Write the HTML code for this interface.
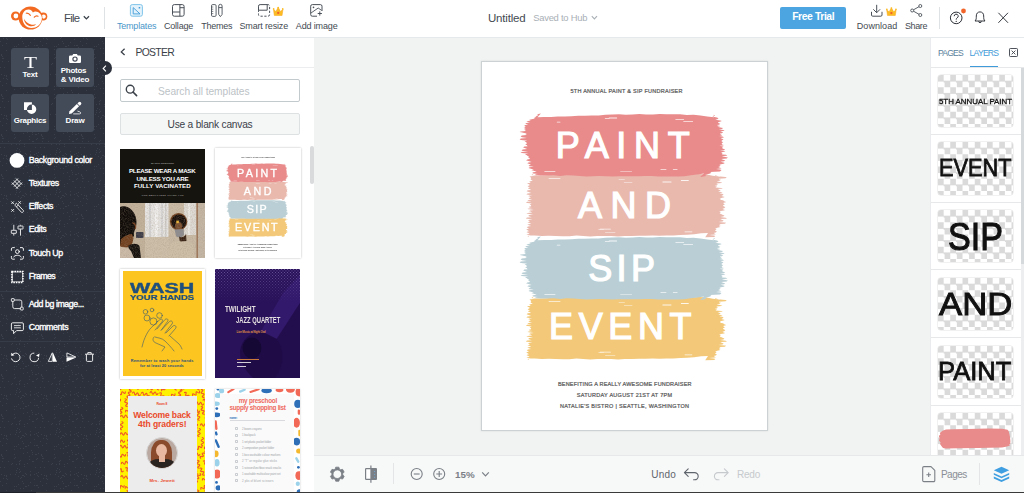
<!DOCTYPE html><html><head><meta charset="utf-8"><title>PicMonkey</title><style>
*{box-sizing:border-box;margin:0;padding:0}
html,body{width:1024px;height:493px;overflow:hidden;background:#f1f2f2;font-family:"Liberation Sans",sans-serif;color:#3b4149}
.a{position:absolute}
.t{position:absolute;white-space:nowrap}
svg{position:absolute;overflow:visible}
#top{position:absolute;left:0;top:0;width:1024px;height:38px;background:#fff;border-bottom:1px solid #e6e9eb}
#side{position:absolute;left:0;top:37px;width:105px;height:455px;background:#2b303b}
#tpl{position:absolute;left:105px;top:38px;width:209px;height:454px;background:#fff;overflow:hidden}
#canvas{position:absolute;left:314px;top:38px;width:617px;height:418px;background:#f1f2f2}
#bot{position:absolute;left:314px;top:455px;width:710px;height:37px;background:#f7f8f8;border-top:1px solid #e6e8e9}
#layers{position:absolute;left:930px;top:38px;width:94px;height:417px;background:#fff;overflow:hidden;border-left:1px solid #e9ebed}
#edge{position:absolute;left:0;top:492px;width:1024px;height:1px;background:#3a3a3a}
#edge i{position:absolute;left:0;top:0;width:36px;height:1px;background:#1e2127}
.sbtn{position:absolute;width:38.5px;height:38.5px;background:#434a58;border-radius:3px}
</style></head><body>
<div id="top"><span class="t" style="left:64.00px;top:10.55px;font-size:11.4px;line-height:15px;color:#444a52;font-weight:normal;font-family:'Liberation Sans',sans-serif;letter-spacing:-0.765px;">File</span><svg style="left:83px;top:15px" width="7" height="6" viewBox="0 0 7 6"><path d="M0.8 1.2 L3.4 3.9 L6 1.2" fill="none" stroke="#3b4149" stroke-width="1.3"/></svg><div class="a" style="left:104px;top:7px;width:1px;height:22px;background:#dfe2e4"></div><span class="t" style="left:116.90px;top:20.08px;font-size:9px;line-height:12px;color:#4a96c9;font-weight:normal;font-family:'Liberation Sans',sans-serif;letter-spacing:-0.181px;">Templates</span><span class="t" style="left:164.00px;top:20.08px;font-size:9px;line-height:12px;color:#444a52;font-weight:normal;font-family:'Liberation Sans',sans-serif;letter-spacing:-0.219px;">Collage</span><span class="t" style="left:201.20px;top:20.08px;font-size:9px;line-height:12px;color:#444a52;font-weight:normal;font-family:'Liberation Sans',sans-serif;letter-spacing:-0.253px;">Themes</span><span class="t" style="left:239.50px;top:20.08px;font-size:9px;line-height:12px;color:#444a52;font-weight:normal;font-family:'Liberation Sans',sans-serif;letter-spacing:-0.168px;">Smart resize</span><span class="t" style="left:295.80px;top:20.08px;font-size:9px;line-height:12px;color:#444a52;font-weight:normal;font-family:'Liberation Sans',sans-serif;letter-spacing:-0.148px;">Add image</span><span class="t" style="left:488.00px;top:10.52px;font-size:11.5px;line-height:15px;color:#444a52;font-weight:normal;font-family:'Liberation Sans',sans-serif;letter-spacing:-0.188px;">Untitled</span><span class="t" style="left:533.20px;top:10.94px;font-size:9.4px;line-height:13px;color:#a9b0b6;font-weight:normal;font-family:'Liberation Sans',sans-serif;letter-spacing:-0.234px;">Saved to Hub</span><svg style="left:591px;top:15px" width="7" height="6" viewBox="0 0 7 6"><path d="M0.8 1.2 L3.4 3.9 L6 1.2" fill="none" stroke="#a9b0b6" stroke-width="1.1"/></svg><div class="a" style="left:780px;top:7px;width:65.5px;height:22px;background:#4ca5e0;border-radius:2px"></div><span class="t" style="left:792.20px;top:9.90px;font-size:10.4px;line-height:14px;color:#fff;font-weight:bold;font-family:'Liberation Sans',sans-serif;letter-spacing:-0.422px;">Free Trial</span><span class="t" style="left:856.80px;top:20.08px;font-size:9px;line-height:12px;color:#444a52;font-weight:normal;font-family:'Liberation Sans',sans-serif;letter-spacing:0.059px;">Download</span><span class="t" style="left:905.00px;top:20.08px;font-size:9px;line-height:12px;color:#444a52;font-weight:normal;font-family:'Liberation Sans',sans-serif;letter-spacing:-0.406px;">Share</span><div class="a" style="left:939px;top:7px;width:1px;height:22px;background:#dfe2e4"></div><svg style="left:0;top:0" width="1024" height="37" viewBox="0 0 1024 37"><g transform="translate(0 0)"><circle cx="15.6" cy="16" r="4.6" fill="#f26a21"/><circle cx="15.9" cy="16" r="2.4" fill="#fff"/><circle cx="43.2" cy="16.5" r="4.1" fill="#f26a21"/><circle cx="43.7" cy="16.6" r="2.1" fill="#fff"/><ellipse cx="30.5" cy="18" rx="11.9" ry="11.5" fill="#f26a21"/><path d="M22.3 17.5 C22 12.5 25 9.3 28.5 9.4 C31 9.5 32.4 11 32.9 12.6 C34 11.3 36 11 38 12 C41 13.5 42.3 16.5 41.8 19.5 C41 24.5 36.5 28 31.5 28 C26 28 22.6 23.5 22.3 17.5 Z" fill="#fff"/><path d="M23.9 18.4 C24.3 23 27.6 26.3 31.6 26.3 C33.6 26.3 35.2 25.4 36.2 24.3 C33 25.2 30 24.6 27.8 22.9 C25.8 21.4 24.6 20 23.9 18.4 Z" fill="#f26a21"/><path d="M26.2 13.2 Q28.8 12.8 30.4 15.4" fill="none" stroke="#f26a21" stroke-width="1.1" stroke-linecap="round"/><path d="M34.3 17.2 Q36 15.2 38 16.2" fill="none" stroke="#f26a21" stroke-width="1.2" stroke-linecap="round"/><rect x="130.4" y="4.6" width="12" height="11.6" rx="1.8" fill="#e4f3fb" stroke="#7fc4ea" stroke-width="1"/><path d="M133.2 7.6 L133.2 13.9 L140 13.9 Z" fill="none" stroke="#3f9bd9" stroke-width="0.9" stroke-linejoin="round"/><rect x="138.7" y="7" width="1.5" height="1.5" fill="#3f9bd9"/><g fill="none" stroke="#4a5058" stroke-width="1"><rect x="172.5" y="4.6" width="11.6" height="11.6" rx="1.8"/><path d="M179.9 4.6 V16.2 M172.5 12 H179.9 M179.9 7.7 H184.1"/></g><g fill="none" stroke="#4a5058" stroke-width="0.9"><rect x="211.5" y="4.6" width="4.6" height="11.8" rx="1.2"/><path d="M211.5 7 h1.8 M211.5 9.2 h1.8 M211.5 11.4 h1.8 M211.5 13.6 h1.8" stroke-width="0.7"/><path d="M218.7 6 a1.7 1.7 0 0 1 3.4 0 V14.4 L220.4 16.6 L218.7 14.4 Z M218.7 7.6 H222.1"/></g><g fill="none" stroke="#4a5058" stroke-width="1"><path d="M258.5 10.2 V6.2 a1.6 1.6 0 0 1 1.6 -1.6 H267.2 V10.2 Z"/><path d="M267.2 4.6 H268 a1.6 1.6 0 0 1 1.6 1.6 V14.6 a1.6 1.6 0 0 1 -1.6 1.6 H260.1 a1.6 1.6 0 0 1 -1.6 -1.6 V10.2" stroke-dasharray="2.2 1.6"/></g><g transform="translate(272.8 6.8) scale(1.080 1.082)"><path d="M0.6 2.2 L2.9 4.4 L5 0.4 L7.1 4.4 L9.4 2.2 L8.6 8 L1.4 8 Z" fill="#fbbd23" stroke="#f9a61a" stroke-width="0.5" stroke-linejoin="round"/><circle cx="5" cy="5.6" r="1.1" fill="#f2612b"/><circle cx="0.8" cy="2" r="0.8" fill="#fbbd23"/><circle cx="9.2" cy="2" r="0.8" fill="#fbbd23"/><circle cx="5" cy="0.7" r="0.8" fill="#fbbd23"/></g><g fill="none" stroke="#4a5058" stroke-width="1"><path d="M317 16.2 H312.3 a1.6 1.6 0 0 1 -1.6 -1.6 V6.2 a1.6 1.6 0 0 1 1.6 -1.6 H320.4 a1.6 1.6 0 0 1 1.6 1.6 V11"/><path d="M311 13 L318.2 8 L321.6 10.4" stroke-width="0.9"/><path d="M319.8 11.4 V15.6 M317.7 13.5 H321.9"/></g><circle cx="313.5" cy="7.4" r="0.8" fill="#4a5058"/><g fill="none" stroke="#4a5058" stroke-width="1" stroke-linecap="round" stroke-linejoin="round"><path d="M876.7 5.2 V12.4 M873.6 9.6 L876.7 12.7 L879.8 9.6"/><path d="M871.5 12.2 V15 a1.2 1.2 0 0 0 1.2 1.2 H880.8 a1.2 1.2 0 0 0 1.2 -1.2 V12.2"/></g><g transform="translate(886 7.4) scale(1.080 1.012)"><path d="M0.6 2.2 L2.9 4.4 L5 0.4 L7.1 4.4 L9.4 2.2 L8.6 8 L1.4 8 Z" fill="#fbbd23" stroke="#f9a61a" stroke-width="0.5" stroke-linejoin="round"/><circle cx="5" cy="5.6" r="1.1" fill="#f2612b"/><circle cx="0.8" cy="2" r="0.8" fill="#fbbd23"/><circle cx="9.2" cy="2" r="0.8" fill="#fbbd23"/><circle cx="5" cy="0.7" r="0.8" fill="#fbbd23"/></g><g fill="none" stroke="#4a5058" stroke-width="0.9"><circle cx="920.3" cy="6" r="1.5"/><circle cx="912.2" cy="10.5" r="1.5"/><circle cx="920.3" cy="15" r="1.5"/><path d="M913.5 9.8 L919 6.7 M913.5 11.2 L919 14.3"/></g><circle cx="956.2" cy="17.9" r="5.8" fill="none" stroke="#2b2f36" stroke-width="1"/><path d="M954.2 16.2 a2 2 0 1 1 3 1.7 c-0.8 0.5 -1 0.9 -1 1.7" fill="none" stroke="#2b2f36" stroke-width="1"/><circle cx="956.2" cy="21.4" r="0.6" fill="#2b2f36"/><circle cx="963.5" cy="11" r="2.4" fill="#f2652a"/><g fill="none" stroke="#2b2f36" stroke-width="0.95" stroke-linejoin="round"><path d="M975 21 C976.4 19.8 976.3 18 976.3 16 C976.3 13.4 977.8 11.9 980 11.9 C982.2 11.9 983.7 13.4 983.7 16 C983.7 18 983.6 19.8 985 21 Z"/><path d="M978.7 21.2 a1.3 1.5 0 0 0 2.6 0"/></g><path d="M998.4 12.8 L1008 22.8 M1008 12.8 L998.4 22.8" stroke="#2b2f36" stroke-width="0.95" fill="none"/></g></svg></div>
<div id="canvas"><div class="a" style="left:167px;top:23px;width:287px;height:370px;background:#fff;border:1px solid #ccd1d4;box-shadow:0 0 2px rgba(0,0,0,.10)"><div class="a" style="left:-0.5px;top:-0.5px;width:286px;height:369px"><svg style="left:0;top:0" width="287" height="369" viewBox="0 0 287 369"><path d="M50.0 113.4 L57.2 113.4 L64.5 113.3 L71.7 112.8 L78.9 112.6 L86.2 112.8 L93.4 112.6 L100.6 112.9 L107.8 112.7 L115.1 112.6 L122.3 112.6 L129.5 112.6 L136.8 112.2 L144.0 112.4 L151.2 112.1 L158.5 112.6 L165.7 112.0 L172.9 112.5 L180.2 111.9 L187.4 112.4 L194.6 112.2 L201.8 112.3 L209.1 112.6 L216.3 112.1 L223.5 112.2 L230.8 113.8 L238.0 114.7 L232.5 113.0 L234.0 113.3 L232.8 113.9 L236.0 114.2 L243.3 115.1 L244.8 115.4 L243.6 116.3 L236.7 116.7 L237.4 117.5 L238.9 117.8 L237.7 118.7 L234.7 119.3 L238.9 120.2 L240.4 120.7 L239.2 121.1 L234.8 121.4 L234.5 122.2 L236.0 122.4 L234.8 123.4 L233.0 123.7 L233.6 124.2 L235.1 124.5 L233.9 125.3 L233.4 125.6 L239.3 125.9 L240.8 126.2 L239.6 126.8 L235.5 127.1 L237.3 127.8 L238.8 128.5 L237.6 129.0 L236.2 129.5 L239.1 130.0 L240.6 130.2 L239.4 130.8 L237.4 131.3 L240.1 131.8 L241.6 132.5 L240.4 133.6 L239.2 134.0 L241.2 134.6 L242.7 135.1 L241.5 135.6 L239.3 136.0 L237.6 136.9 L239.1 137.2 L237.9 137.7 L241.0 138.3 L242.7 139.4 L244.2 140.0 L243.0 140.5 L241.6 140.8 L241.5 141.7 L243.0 142.3 L241.8 143.0 L240.8 143.3 L241.9 144.5 L243.4 145.1 L242.2 146.2 L240.5 146.7 L241.6 147.5 L243.1 148.0 L241.9 148.6 L239.0 149.0 L237.3 149.8 L238.8 150.4 L237.6 151.4 L239.0 152.0 L241.0 153.0 L242.5 153.4 L241.3 154.4 L238.2 154.9 L243.5 155.7 L245.0 156.2 L243.8 156.7 L238.3 157.0 L240.2 157.9 L241.7 158.5 L240.5 159.4 L236.2 159.9 L242.6 160.5 L244.1 160.8 L242.9 161.7 L238.0 162.0 L237.4 162.6 L238.9 163.0 L237.7 163.5 L236.9 163.8 L237.1 164.3 L238.6 164.9 L237.4 165.3 L235.3 165.7 L233.2 166.8 L234.7 167.4 L233.5 167.9 L233.2 168.3 L233.5 168.9 L235.0 169.6 L233.8 170.4 L232.2 170.8 L232.5 171.8 L234.0 172.2 L232.8 172.6 L226.9 172.9 L231.9 173.4 L233.4 174.1 L232.2 174.9 L223.2 175.2 L226.0 171.1 L219.1 171.3 L212.2 172.2 L205.2 172.7 L198.3 173.0 L191.4 173.5 L184.5 173.4 L177.5 173.7 L170.6 173.5 L163.7 173.7 L156.8 173.8 L149.8 173.9 L142.9 174.0 L136.0 174.4 L129.1 173.9 L122.2 173.9 L115.2 173.9 L108.3 174.4 L101.4 174.0 L94.5 173.6 L87.5 174.2 L80.6 174.2 L73.7 174.1 L66.8 173.7 L59.8 174.0 L52.9 173.6 L46.0 173.4 L47.0 174.9 L45.5 174.6 L46.7 173.6 L48.4 173.3 L45.9 173.0 L44.4 172.6 L45.6 172.2 L47.7 171.9 L46.0 170.8 L44.5 170.3 L45.7 169.6 L47.0 169.2 L45.7 168.3 L44.2 167.8 L45.4 167.1 L46.9 166.6 L46.2 166.0 L44.7 165.6 L45.9 164.5 L49.1 164.1 L46.8 163.2 L45.3 162.8 L46.5 162.2 L49.3 161.7 L46.9 160.7 L45.4 160.4 L46.6 160.0 L48.3 159.8 L47.6 159.4 L46.1 158.7 L47.3 157.7 L50.6 157.2 L45.3 156.8 L43.8 156.5 L45.0 155.6 L49.8 155.2 L47.6 154.6 L46.1 154.0 L47.3 152.9 L51.2 152.4 L45.8 151.7 L44.3 151.2 L45.5 150.9 L50.1 150.6 L48.4 149.6 L46.9 149.2 L48.1 148.6 L51.8 148.1 L46.9 147.3 L45.4 146.9 L46.6 146.4 L50.8 146.1 L48.1 145.7 L46.6 145.1 L47.8 144.6 L49.1 144.2 L49.1 143.3 L47.6 142.8 L48.8 142.0 L49.7 141.6 L45.4 141.0 L43.9 140.5 L45.1 139.8 L49.6 139.6 L46.8 139.1 L45.3 138.4 L46.5 137.9 L50.2 137.5 L47.8 136.9 L46.3 136.6 L47.5 135.8 L48.8 135.5 L47.7 134.5 L46.2 134.2 L47.4 133.5 L50.5 133.2 L45.8 132.7 L44.3 132.2 L45.5 131.5 L49.2 130.9 L46.1 129.8 L44.6 129.2 L45.8 128.3 L49.3 128.0 L47.4 127.0 L45.9 126.5 L47.1 125.6 L48.5 125.3 L47.1 125.0 L45.6 124.5 L46.8 123.5 L48.0 122.9 L46.5 121.9 L45.0 121.4 L46.2 121.1 L48.1 120.9 L48.5 120.3 L47.0 119.9 L48.2 119.2 L50.8 118.7 L49.8 118.3 L48.3 117.6 L49.5 116.9 L48.8 116.6 L49.0 115.4 L47.5 114.8 L48.7 114.3 L51.8 113.9 L51.0 113.5 L49.5 112.9 L50.7 111.9 L51.8 111.5Z" fill="#e9b9ae"/><g fill="#fff" opacity="0.85"><rect x="136.6" y="117.5" width="6.2" height="0.5" rx="0.3"/><rect x="202.6" y="169.5" width="7.7" height="0.8" rx="0.3"/><rect x="198.9" y="118.1" width="7.9" height="0.8" rx="0.3"/><rect x="117.7" y="166.8" width="11.1" height="0.8" rx="0.3"/><rect x="141.8" y="120.2" width="8.6" height="0.6" rx="0.3"/><rect x="123.1" y="170.4" width="10.2" height="0.7" rx="0.3"/><rect x="180.4" y="119.6" width="9.1" height="0.8" rx="0.3"/><rect x="116.3" y="167.1" width="5.6" height="0.5" rx="0.3"/><rect x="66.6" y="116.3" width="11.8" height="0.7" rx="0.3"/></g><path d="M50.0 236.4 L57.2 236.4 L64.5 236.3 L71.7 235.8 L78.9 235.6 L86.2 235.8 L93.4 235.6 L100.6 235.9 L107.8 235.7 L115.1 235.6 L122.3 235.6 L129.5 235.6 L136.8 235.2 L144.0 235.4 L151.2 235.1 L158.5 235.6 L165.7 235.0 L172.9 235.5 L180.2 234.9 L187.4 235.4 L194.6 235.2 L201.8 235.3 L209.1 235.6 L216.3 235.1 L223.5 235.2 L230.8 236.8 L238.0 237.7 L232.5 236.0 L234.0 236.3 L232.8 236.9 L236.0 237.2 L243.3 238.1 L244.8 238.4 L243.6 239.3 L236.7 239.7 L237.4 240.5 L238.9 240.8 L237.7 241.7 L234.7 242.3 L238.9 243.2 L240.4 243.7 L239.2 244.1 L234.8 244.4 L234.5 245.2 L236.0 245.4 L234.8 246.4 L233.0 246.7 L233.6 247.2 L235.1 247.5 L233.9 248.3 L233.4 248.6 L239.3 248.9 L240.8 249.2 L239.6 249.8 L235.5 250.1 L237.3 250.8 L238.8 251.5 L237.6 252.0 L236.2 252.5 L239.1 253.0 L240.6 253.2 L239.4 253.8 L237.4 254.3 L240.1 254.8 L241.6 255.5 L240.4 256.6 L239.2 257.0 L241.2 257.6 L242.7 258.1 L241.5 258.6 L239.3 259.0 L237.6 259.9 L239.1 260.2 L237.9 260.7 L241.0 261.3 L242.7 262.4 L244.2 263.0 L243.0 263.5 L241.6 263.8 L241.5 264.7 L243.0 265.3 L241.8 266.0 L240.8 266.3 L241.9 267.5 L243.4 268.1 L242.2 269.2 L240.5 269.7 L241.6 270.5 L243.1 271.0 L241.9 271.6 L239.0 272.0 L237.3 272.8 L238.8 273.4 L237.6 274.4 L239.0 275.0 L241.0 276.0 L242.5 276.4 L241.3 277.4 L238.2 277.9 L243.5 278.7 L245.0 279.2 L243.8 279.7 L238.3 280.0 L240.2 280.9 L241.7 281.5 L240.5 282.4 L236.2 282.9 L242.6 283.5 L244.1 283.8 L242.9 284.7 L238.0 285.0 L237.4 285.6 L238.9 286.0 L237.7 286.5 L236.9 286.8 L237.1 287.3 L238.6 287.9 L237.4 288.3 L235.3 288.7 L233.2 289.8 L234.7 290.4 L233.5 290.9 L233.2 291.3 L233.5 291.9 L235.0 292.6 L233.8 293.4 L232.2 293.8 L232.5 294.8 L234.0 295.2 L232.8 295.6 L226.9 295.9 L231.9 296.4 L233.4 297.1 L232.2 297.9 L223.2 298.2 L226.0 294.1 L219.1 294.3 L212.2 295.2 L205.2 295.7 L198.3 296.0 L191.4 296.5 L184.5 296.4 L177.5 296.7 L170.6 296.5 L163.7 296.7 L156.8 296.8 L149.8 296.9 L142.9 297.0 L136.0 297.4 L129.1 296.9 L122.2 296.9 L115.2 296.9 L108.3 297.4 L101.4 297.0 L94.5 296.6 L87.5 297.2 L80.6 297.2 L73.7 297.1 L66.8 296.7 L59.8 297.0 L52.9 296.6 L46.0 296.4 L47.0 297.9 L45.5 297.6 L46.7 296.6 L48.4 296.3 L45.9 296.0 L44.4 295.6 L45.6 295.2 L47.7 294.9 L46.0 293.8 L44.5 293.3 L45.7 292.6 L47.0 292.2 L45.7 291.3 L44.2 290.8 L45.4 290.1 L46.9 289.6 L46.2 289.0 L44.7 288.6 L45.9 287.5 L49.1 287.1 L46.8 286.2 L45.3 285.8 L46.5 285.2 L49.3 284.7 L46.9 283.7 L45.4 283.4 L46.6 283.0 L48.3 282.8 L47.6 282.4 L46.1 281.7 L47.3 280.7 L50.6 280.2 L45.3 279.8 L43.8 279.5 L45.0 278.6 L49.8 278.2 L47.6 277.6 L46.1 277.0 L47.3 275.9 L51.2 275.4 L45.8 274.7 L44.3 274.2 L45.5 273.9 L50.1 273.6 L48.4 272.6 L46.9 272.2 L48.1 271.6 L51.8 271.1 L46.9 270.3 L45.4 269.9 L46.6 269.4 L50.8 269.1 L48.1 268.7 L46.6 268.1 L47.8 267.6 L49.1 267.2 L49.1 266.3 L47.6 265.8 L48.8 265.0 L49.7 264.6 L45.4 264.0 L43.9 263.5 L45.1 262.8 L49.6 262.6 L46.8 262.1 L45.3 261.4 L46.5 260.9 L50.2 260.5 L47.8 259.9 L46.3 259.6 L47.5 258.8 L48.8 258.5 L47.7 257.5 L46.2 257.2 L47.4 256.5 L50.5 256.2 L45.8 255.7 L44.3 255.2 L45.5 254.5 L49.2 253.9 L46.1 252.8 L44.6 252.2 L45.8 251.3 L49.3 251.0 L47.4 250.0 L45.9 249.5 L47.1 248.6 L48.5 248.3 L47.1 248.0 L45.6 247.5 L46.8 246.5 L48.0 245.9 L46.5 244.9 L45.0 244.4 L46.2 244.1 L48.1 243.9 L48.5 243.3 L47.0 242.9 L48.2 242.2 L50.8 241.7 L49.8 241.3 L48.3 240.6 L49.5 239.9 L48.8 239.6 L49.0 238.4 L47.5 237.8 L48.7 237.3 L51.8 236.9 L51.0 236.5 L49.5 235.9 L50.7 234.9 L51.8 234.5Z" fill="#f3c878"/><g fill="#fff" opacity="0.85"><rect x="136.6" y="240.5" width="6.2" height="0.5" rx="0.3"/><rect x="202.6" y="292.5" width="7.7" height="0.8" rx="0.3"/><rect x="198.9" y="241.1" width="7.9" height="0.8" rx="0.3"/><rect x="117.7" y="289.8" width="11.1" height="0.8" rx="0.3"/><rect x="141.8" y="243.2" width="8.6" height="0.6" rx="0.3"/><rect x="123.1" y="293.4" width="10.2" height="0.7" rx="0.3"/><rect x="180.4" y="242.6" width="9.1" height="0.8" rx="0.3"/><rect x="116.3" y="290.1" width="5.6" height="0.5" rx="0.3"/><rect x="66.6" y="239.3" width="11.8" height="0.7" rx="0.3"/></g><path d="M55.5 55.2 L62.3 55.0 L69.1 55.1 L75.9 54.6 L82.7 54.4 L89.4 54.3 L96.2 53.8 L103.0 53.8 L109.8 53.6 L116.6 53.5 L123.4 52.7 L130.2 52.6 L137.0 52.3 L143.8 52.7 L150.5 52.5 L157.3 52.0 L164.1 52.5 L170.9 52.4 L177.7 52.1 L184.5 52.3 L191.3 52.2 L198.1 52.3 L204.8 52.9 L211.6 52.8 L218.4 53.5 L225.2 54.5 L232.0 55.3 L231.6 52.8 L233.1 53.4 L231.9 54.1 L230.2 54.6 L235.0 55.5 L236.5 56.2 L235.3 57.3 L233.2 57.8 L238.3 58.4 L239.8 59.0 L238.6 59.6 L235.9 60.2 L236.8 61.3 L238.3 61.7 L237.1 62.7 L234.7 63.1 L236.8 63.7 L238.3 64.1 L237.1 64.5 L235.2 64.8 L239.6 65.8 L241.1 66.1 L239.9 67.0 L236.8 67.3 L241.1 68.0 L242.6 68.5 L241.4 68.9 L238.2 69.3 L239.6 69.8 L241.1 70.2 L239.9 71.2 L237.9 71.5 L238.8 72.6 L240.3 73.3 L239.1 73.7 L237.2 74.1 L240.5 74.6 L242.0 75.2 L240.8 75.7 L238.7 76.1 L240.0 76.8 L241.5 77.3 L240.3 78.3 L239.6 78.6 L239.8 79.7 L241.3 80.0 L240.1 80.9 L239.6 81.5 L240.5 82.7 L242.0 83.1 L240.8 83.5 L237.4 83.7 L240.0 84.2 L241.5 84.8 L240.3 85.6 L239.9 85.9 L241.7 86.9 L243.2 87.5 L242.0 88.3 L237.8 88.6 L242.0 89.1 L243.5 89.4 L242.3 89.8 L239.1 90.2 L239.3 90.6 L240.8 91.1 L239.6 92.0 L240.5 92.4 L243.9 92.7 L245.4 93.4 L244.2 93.7 L239.7 94.2 L244.4 95.2 L245.9 95.6 L244.7 96.5 L239.2 97.1 L241.8 98.0 L243.3 98.4 L242.1 99.3 L238.5 99.8 L241.3 100.5 L242.8 101.0 L241.6 101.8 L239.0 102.2 L237.2 103.0 L238.7 103.7 L237.5 104.6 L236.2 104.9 L238.1 105.7 L239.6 106.3 L238.4 106.6 L234.0 107.1 L238.0 107.6 L239.5 108.1 L238.3 109.2 L237.9 109.5 L227.9 110.0 L229.4 110.4 L228.2 111.4 L227.1 111.8 L222.8 113.0 L224.3 113.4 L223.1 114.3 L218.0 114.9 L222.0 111.6 L215.5 112.4 L208.9 113.3 L202.4 114.2 L195.8 114.5 L189.3 114.5 L182.8 114.4 L176.2 114.6 L169.7 114.1 L163.2 114.1 L156.6 114.3 L150.1 114.2 L143.5 114.2 L137.0 114.3 L130.5 114.4 L123.9 114.2 L117.4 114.0 L110.8 114.3 L104.3 114.4 L97.8 113.9 L91.2 113.5 L84.7 113.3 L78.2 113.9 L71.6 113.2 L65.1 113.6 L58.5 113.4 L52.0 113.1 L54.3 113.2 L52.8 112.9 L54.0 112.2 L56.0 112.0 L51.6 111.5 L50.1 111.1 L51.3 110.2 L54.7 109.8 L50.9 108.6 L49.4 108.2 L50.6 107.7 L51.8 107.5 L48.0 106.6 L46.5 106.0 L47.7 105.3 L51.8 104.8 L47.9 104.2 L46.4 103.9 L47.6 102.9 L49.0 102.4 L46.7 101.7 L45.2 101.2 L46.4 100.5 L49.7 99.9 L45.6 98.8 L44.1 98.4 L45.3 97.6 L47.8 97.0 L47.5 96.1 L46.0 95.4 L47.2 94.7 L46.0 94.2 L44.5 93.0 L43.0 92.7 L44.2 92.1 L46.6 91.7 L40.0 90.9 L38.5 90.3 L39.7 89.9 L46.1 89.6 L41.0 89.1 L39.5 88.5 L40.7 87.6 L45.1 87.1 L42.6 85.9 L41.1 85.5 L42.3 84.6 L45.6 84.2 L44.7 83.1 L43.2 82.7 L44.4 81.7 L45.0 81.2 L44.0 80.1 L42.5 79.6 L43.7 79.1 L45.5 78.7 L39.1 77.9 L37.6 77.5 L38.8 76.5 L44.9 76.1 L40.1 75.2 L38.6 74.5 L39.8 73.4 L44.2 73.1 L44.8 72.7 L43.3 72.3 L44.5 71.7 L44.4 71.4 L39.1 70.3 L37.6 70.0 L38.8 69.5 L43.7 69.0 L43.5 68.4 L42.0 67.8 L43.2 67.4 L43.6 67.0 L43.1 66.5 L41.6 66.1 L42.8 65.5 L43.4 65.1 L43.6 64.6 L42.1 64.1 L43.3 63.1 L46.4 62.7 L44.7 62.2 L43.2 61.5 L44.4 60.9 L48.0 60.6 L45.8 60.1 L44.3 59.8 L45.5 59.3 L47.2 58.8 L48.8 58.4 L47.3 57.8 L48.5 57.4 L50.7 57.1 L53.0 56.8 L51.5 56.1 L52.7 55.7 L53.3 55.3 L54.6 54.5 L53.1 54.2 L54.3 53.9 L55.7 53.6 L56.5 52.9 L55.0 52.5 L56.2 52.1 L58.9 51.5Z" fill="#e98b8b"/><g fill="#fff" opacity="0.85"><rect x="74.8" y="59.8" width="3.6" height="0.7" rx="0.3"/><rect x="178.5" y="107.3" width="5.9" height="0.7" rx="0.3"/><rect x="126.7" y="55.6" width="8.4" height="0.8" rx="0.3"/><rect x="190.9" y="107.3" width="4.6" height="0.8" rx="0.3"/><rect x="122.8" y="56.2" width="4.8" height="0.7" rx="0.3"/><rect x="62.4" y="109.0" width="11.0" height="0.8" rx="0.3"/><rect x="193.4" y="57.3" width="8.7" height="0.7" rx="0.3"/><rect x="138.2" y="109.0" width="11.8" height="0.6" rx="0.3"/><rect x="201.3" y="59.0" width="9.7" height="0.8" rx="0.3"/></g><path d="M55.5 178.2 L62.3 178.0 L69.1 178.1 L75.9 177.6 L82.7 177.4 L89.4 177.3 L96.2 176.8 L103.0 176.8 L109.8 176.6 L116.6 176.5 L123.4 175.7 L130.2 175.6 L137.0 175.3 L143.8 175.7 L150.5 175.5 L157.3 175.0 L164.1 175.5 L170.9 175.4 L177.7 175.1 L184.5 175.3 L191.3 175.2 L198.1 175.3 L204.8 175.9 L211.6 175.8 L218.4 176.5 L225.2 177.5 L232.0 178.3 L231.6 175.8 L233.1 176.4 L231.9 177.1 L230.2 177.6 L235.0 178.5 L236.5 179.2 L235.3 180.3 L233.2 180.8 L238.3 181.4 L239.8 182.0 L238.6 182.6 L235.9 183.2 L236.8 184.3 L238.3 184.7 L237.1 185.7 L234.7 186.1 L236.8 186.7 L238.3 187.1 L237.1 187.5 L235.2 187.8 L239.6 188.8 L241.1 189.1 L239.9 190.0 L236.8 190.3 L241.1 191.0 L242.6 191.5 L241.4 191.9 L238.2 192.3 L239.6 192.8 L241.1 193.2 L239.9 194.2 L237.9 194.5 L238.8 195.6 L240.3 196.3 L239.1 196.7 L237.2 197.1 L240.5 197.6 L242.0 198.2 L240.8 198.7 L238.7 199.1 L240.0 199.8 L241.5 200.3 L240.3 201.3 L239.6 201.6 L239.8 202.7 L241.3 203.0 L240.1 203.9 L239.6 204.5 L240.5 205.7 L242.0 206.1 L240.8 206.5 L237.4 206.7 L240.0 207.2 L241.5 207.8 L240.3 208.6 L239.9 208.9 L241.7 209.9 L243.2 210.5 L242.0 211.3 L237.8 211.6 L242.0 212.1 L243.5 212.4 L242.3 212.8 L239.1 213.2 L239.3 213.6 L240.8 214.1 L239.6 215.0 L240.5 215.4 L243.9 215.7 L245.4 216.4 L244.2 216.7 L239.7 217.2 L244.4 218.2 L245.9 218.6 L244.7 219.5 L239.2 220.1 L241.8 221.0 L243.3 221.4 L242.1 222.3 L238.5 222.8 L241.3 223.5 L242.8 224.0 L241.6 224.8 L239.0 225.2 L237.2 226.0 L238.7 226.7 L237.5 227.6 L236.2 227.9 L238.1 228.7 L239.6 229.3 L238.4 229.6 L234.0 230.1 L238.0 230.6 L239.5 231.1 L238.3 232.2 L237.9 232.5 L227.9 233.0 L229.4 233.4 L228.2 234.4 L227.1 234.8 L222.8 236.0 L224.3 236.4 L223.1 237.3 L218.0 237.9 L222.0 234.6 L215.5 235.4 L208.9 236.3 L202.4 237.2 L195.8 237.5 L189.3 237.5 L182.8 237.4 L176.2 237.6 L169.7 237.1 L163.2 237.1 L156.6 237.3 L150.1 237.2 L143.5 237.2 L137.0 237.3 L130.5 237.4 L123.9 237.2 L117.4 237.0 L110.8 237.3 L104.3 237.4 L97.8 236.9 L91.2 236.5 L84.7 236.3 L78.2 236.9 L71.6 236.2 L65.1 236.6 L58.5 236.4 L52.0 236.1 L54.3 236.2 L52.8 235.9 L54.0 235.2 L56.0 235.0 L51.6 234.5 L50.1 234.1 L51.3 233.2 L54.7 232.8 L50.9 231.6 L49.4 231.2 L50.6 230.7 L51.8 230.5 L48.0 229.6 L46.5 229.0 L47.7 228.3 L51.8 227.8 L47.9 227.2 L46.4 226.9 L47.6 225.9 L49.0 225.4 L46.7 224.7 L45.2 224.2 L46.4 223.5 L49.7 222.9 L45.6 221.8 L44.1 221.4 L45.3 220.6 L47.8 220.0 L47.5 219.1 L46.0 218.4 L47.2 217.7 L46.0 217.2 L44.5 216.0 L43.0 215.7 L44.2 215.1 L46.6 214.7 L40.0 213.9 L38.5 213.3 L39.7 212.9 L46.1 212.6 L41.0 212.1 L39.5 211.5 L40.7 210.6 L45.1 210.1 L42.6 208.9 L41.1 208.5 L42.3 207.6 L45.6 207.2 L44.7 206.1 L43.2 205.7 L44.4 204.7 L45.0 204.2 L44.0 203.1 L42.5 202.6 L43.7 202.1 L45.5 201.7 L39.1 200.9 L37.6 200.5 L38.8 199.5 L44.9 199.1 L40.1 198.2 L38.6 197.5 L39.8 196.4 L44.2 196.1 L44.8 195.7 L43.3 195.3 L44.5 194.7 L44.4 194.4 L39.1 193.3 L37.6 193.0 L38.8 192.5 L43.7 192.0 L43.5 191.4 L42.0 190.8 L43.2 190.4 L43.6 190.0 L43.1 189.5 L41.6 189.1 L42.8 188.5 L43.4 188.1 L43.6 187.6 L42.1 187.1 L43.3 186.1 L46.4 185.7 L44.7 185.2 L43.2 184.5 L44.4 183.9 L48.0 183.6 L45.8 183.1 L44.3 182.8 L45.5 182.3 L47.2 181.8 L48.8 181.4 L47.3 180.8 L48.5 180.4 L50.7 180.1 L53.0 179.8 L51.5 179.1 L52.7 178.7 L53.3 178.3 L54.6 177.5 L53.1 177.2 L54.3 176.9 L55.7 176.6 L56.5 175.9 L55.0 175.5 L56.2 175.1 L58.9 174.5Z" fill="#b9cfd5"/><g fill="#fff" opacity="0.85"><rect x="74.8" y="182.8" width="3.6" height="0.7" rx="0.3"/><rect x="178.5" y="230.3" width="5.9" height="0.7" rx="0.3"/><rect x="126.7" y="178.6" width="8.4" height="0.8" rx="0.3"/><rect x="190.9" y="230.3" width="4.6" height="0.8" rx="0.3"/><rect x="122.8" y="179.2" width="4.8" height="0.7" rx="0.3"/><rect x="62.4" y="232.0" width="11.0" height="0.8" rx="0.3"/><rect x="193.4" y="180.3" width="8.7" height="0.7" rx="0.3"/><rect x="138.2" y="232.0" width="11.8" height="0.6" rx="0.3"/><rect x="201.3" y="182.0" width="9.7" height="0.8" rx="0.3"/></g></svg><span class="t" style="left:89.00px;top:25.99px;font-size:5.5px;line-height:8px;color:#5a5a5a;font-weight:normal;font-family:'Liberation Sans',sans-serif;letter-spacing:0.259px;-webkit-text-stroke:0.22px #5a5a5a;">5TH ANNUAL PAINT &amp; SIP FUNDRAISER</span><span class="t" style="left:74.20px;top:60.43px;font-size:36px;line-height:47px;color:#fff;font-weight:normal;font-family:'Liberation Sans',sans-serif;letter-spacing:7.664px;-webkit-text-stroke:1.2px #fff;">PAINT</span><span class="t" style="left:96.40px;top:120.83px;font-size:36px;line-height:47px;color:#fff;font-weight:normal;font-family:'Liberation Sans',sans-serif;letter-spacing:8.592px;-webkit-text-stroke:1.2px #fff;">AND</span><span class="t" style="left:106.80px;top:183.13px;font-size:36px;line-height:47px;color:#fff;font-weight:normal;font-family:'Liberation Sans',sans-serif;letter-spacing:4.284px;-webkit-text-stroke:1.2px #fff;">SIP</span><span class="t" style="left:67.50px;top:241.93px;font-size:36px;line-height:47px;color:#fff;font-weight:normal;font-family:'Liberation Sans',sans-serif;letter-spacing:5.642px;-webkit-text-stroke:1.2px #fff;">EVENT</span><span class="t" style="left:76.50px;top:318.59px;font-size:5.5px;line-height:8px;color:#5a5a5a;font-weight:normal;font-family:'Liberation Sans',sans-serif;letter-spacing:0.183px;-webkit-text-stroke:0.22px #5a5a5a;">BENEFITING A REALLY AWESOME FUNDRAISER</span><span class="t" style="left:95.20px;top:329.09px;font-size:5.5px;line-height:8px;color:#5a5a5a;font-weight:normal;font-family:'Liberation Sans',sans-serif;letter-spacing:0.272px;-webkit-text-stroke:0.22px #5a5a5a;">SATURDAY AUGUST 21ST AT 7PM</span><span class="t" style="left:78.50px;top:340.09px;font-size:5.5px;line-height:8px;color:#5a5a5a;font-weight:normal;font-family:'Liberation Sans',sans-serif;letter-spacing:0.297px;-webkit-text-stroke:0.22px #5a5a5a;">NATALIE'S BISTRO | SEATTLE, WASHINGTON</span></div></div></div>
<div id="tpl"><svg  style="left:15px;top:10.100000000000001px" width="6" height="8" viewBox="0 0 6 8"><path d="M4.6 0.8 L1.3 3.9 L4.6 7" fill="none" stroke="#3b4149" stroke-width="1.3"/></svg><span class="t" style="left:30.50px;top:7.60px;font-size:10.4px;line-height:14px;color:#3b4149;font-weight:normal;font-family:'Liberation Sans',sans-serif;letter-spacing:-0.706px;">POSTER</span><div class="a" style="left:0.00px;top:29.00px;width:209.00px;height:1.00px;background:#ebedee"></div><div class="a" style="left:15.00px;top:41.00px;width:180.00px;height:22.60px;border:1px solid #c3cacd;border-radius:2px;background:#fff"></div><svg  style="left:20px;top:46px" width="13" height="13" viewBox="0 0 13 13"><circle cx="5.2" cy="5.2" r="3.9" fill="none" stroke="#3b4149" stroke-width="1.4"/><path d="M8 8 L11.6 11.6" stroke="#3b4149" stroke-width="1.6" stroke-linecap="round"/></svg><span class="t" style="left:53.00px;top:47.07px;font-size:10.2px;line-height:14px;color:#bcc2c6;font-weight:normal;font-family:'Liberation Sans',sans-serif;letter-spacing:-0.041px;">Search all templates</span><div class="a" style="left:15.00px;top:75.00px;width:180.00px;height:21.60px;border:1px solid #dde1e2;border-radius:2px;background:#f5f7f7"></div><span class="t" style="left:62.50px;top:80.07px;font-size:10.2px;line-height:14px;color:#3b4149;font-weight:normal;font-family:'Liberation Sans',sans-serif;letter-spacing:-0.218px;">Use a blank canvas</span><div class="a" style="left:205.00px;top:108.00px;width:4.00px;height:38.00px;background:#d8dadc;border-radius:2px"></div><div class="a" style="left:15.00px;top:110.50px;width:85.00px;height:109.50px;overflow:hidden;background:#15140f"><div class="a" style="left:0;top:0;width:85px;height:55px;background:#15140f"></div><svg style="left:0;top:54.8px" width="85" height="55" viewBox="0 0 85 55"><defs><filter id="nz" x="0" y="0" width="100%" height="100%"><feTurbulence type="fractalNoise" baseFrequency="0.9" numOctaves="2" seed="4" result="n"/><feColorMatrix in="n" type="matrix" values="0 0 0 0 0.35  0 0 0 0 0.28  0 0 0 0 0.2  0.9 0.9 0 0 -0.75"/><feComposite in2="SourceGraphic" operator="in"/></filter></defs><rect width="85" height="55" fill="#c9baa5"/><rect x="0" y="0" width="25" height="55" fill="#c2b19b"/><rect x="25" y="0" width="23.5" height="36" fill="#e6e4e2"/><rect x="29" y="0" width="2" height="35" fill="#d4d3d3"/><rect x="35" y="0" width="3" height="36" fill="#f1f0ef"/><rect x="41" y="0" width="2" height="35" fill="#d6d5d5"/><rect x="45" y="0" width="1.5" height="36" fill="#cfcdcb"/><rect x="25" y="34" width="24" height="21" fill="#cdbfa9"/><rect x="64" y="0" width="12" height="32" fill="#dedad4"/><rect x="68" y="0" width="2" height="32" fill="#ece9e5"/><rect x="76.6" y="0" width="1.1" height="55" fill="#8c5c3c"/><rect x="78" y="0" width="7" height="55" fill="#c4b6a4"/><rect x="16" y="29" width="7.5" height="6" rx="0.8" fill="#3b3b47"/><path d="M0 4 C5 2 11 5 14 10 C17 15 17 21 15.5 25 C14.5 28 13.5 30 14 33 L11 36 L6 40 L0 42 Z" fill="#100b08"/><path d="M12.5 20 C15 20 16.5 23 15 26" fill="none" stroke="#7a4525" stroke-width="1.3"/><path d="M1 36 C4 33 9 31 12 31 L13.5 35 L12.5 40 L9 44 L3 45 L0 43 Z" fill="#70401f"/><path d="M8 43 C12 40 17 40 19.5 43 L21 55 L12 55 Z" fill="#15100d"/><path d="M0 44 C4 43.5 9 45 11 48 L14 55 L0 55 Z" fill="#cbbba8"/><circle cx="58.6" cy="18.6" r="8.7" fill="#6e3f1f"/><circle cx="58.8" cy="18.8" r="7.4" fill="#1a100b"/><path d="M55 22.5 C55.3 19.5 57.4 18.4 59.6 18.9 C61.6 19.4 62.3 21.4 62 23.6 L61.5 27 L55.6 27 Z" fill="#7a4d2e"/><rect x="56.3" y="17.6" width="2.6" height="2.6" fill="#e8b23a"/><path d="M54.6 26.6 L63.6 26 L64 31.5 C63 34.6 58.5 35.5 56 33 Z" fill="#8d8c90"/><path d="M59 33.5 C61 35 64.5 34.5 66 31 L66.5 38 L60 40 Z" fill="#3a2416"/><path d="M50 41 C53 38.5 58 37.5 61 38.5 C65 37.5 70 38.5 73 41.5 L75 55 L48 55 Z" fill="#cdbfa8"/><rect width="85" height="55" fill="#000" filter="url(#nz)" opacity="0.55"/></svg></div><span class="t" style="left:24.00px;top:127.95px;font-size:6.2px;line-height:9px;color:#fff;font-weight:bold;font-family:'Liberation Sans',sans-serif;letter-spacing:-0.256px;">PLEASE WEAR A MASK</span><span class="t" style="left:31.60px;top:135.55px;font-size:6.2px;line-height:9px;color:#fff;font-weight:bold;font-family:'Liberation Sans',sans-serif;letter-spacing:-0.206px;">UNLESS YOU ARE</span><span class="t" style="left:29.00px;top:143.15px;font-size:6.2px;line-height:9px;color:#fff;font-weight:bold;font-family:'Liberation Sans',sans-serif;letter-spacing:0.032px;">FULLY VACINATED</span><span class="t" style="left:46.00px;top:124.17px;font-size:2.4px;line-height:4px;color:#9a9a96;font-weight:bold;font-family:'Liberation Sans',sans-serif;letter-spacing:0.083px;">MASKS REQUIRED</span><span class="t" style="left:36.60px;top:156.37px;font-size:2.4px;line-height:4px;color:#9a9a96;font-weight:bold;font-family:'Liberation Sans',sans-serif;letter-spacing:0.287px;">OUR EMPLOYEES THANK YOU</span><div class="a" style="left:110.00px;top:110.00px;width:85.50px;height:110.00px;background:#fff;box-shadow:0 0 2px rgba(0,0,0,.28);overflow:hidden"><div class="a" style="left:0;top:0;width:287px;height:369px;transform:scale(0.298);transform-origin:0 0"><svg style="left:0;top:0" width="287" height="369" viewBox="0 0 287 369"><path d="M50.0 113.4 L57.2 113.4 L64.5 113.3 L71.7 112.8 L78.9 112.6 L86.2 112.8 L93.4 112.6 L100.6 112.9 L107.8 112.7 L115.1 112.6 L122.3 112.6 L129.5 112.6 L136.8 112.2 L144.0 112.4 L151.2 112.1 L158.5 112.6 L165.7 112.0 L172.9 112.5 L180.2 111.9 L187.4 112.4 L194.6 112.2 L201.8 112.3 L209.1 112.6 L216.3 112.1 L223.5 112.2 L230.8 113.8 L238.0 114.7 L232.5 113.0 L234.0 113.3 L232.8 113.9 L236.0 114.2 L243.3 115.1 L244.8 115.4 L243.6 116.3 L236.7 116.7 L237.4 117.5 L238.9 117.8 L237.7 118.7 L234.7 119.3 L238.9 120.2 L240.4 120.7 L239.2 121.1 L234.8 121.4 L234.5 122.2 L236.0 122.4 L234.8 123.4 L233.0 123.7 L233.6 124.2 L235.1 124.5 L233.9 125.3 L233.4 125.6 L239.3 125.9 L240.8 126.2 L239.6 126.8 L235.5 127.1 L237.3 127.8 L238.8 128.5 L237.6 129.0 L236.2 129.5 L239.1 130.0 L240.6 130.2 L239.4 130.8 L237.4 131.3 L240.1 131.8 L241.6 132.5 L240.4 133.6 L239.2 134.0 L241.2 134.6 L242.7 135.1 L241.5 135.6 L239.3 136.0 L237.6 136.9 L239.1 137.2 L237.9 137.7 L241.0 138.3 L242.7 139.4 L244.2 140.0 L243.0 140.5 L241.6 140.8 L241.5 141.7 L243.0 142.3 L241.8 143.0 L240.8 143.3 L241.9 144.5 L243.4 145.1 L242.2 146.2 L240.5 146.7 L241.6 147.5 L243.1 148.0 L241.9 148.6 L239.0 149.0 L237.3 149.8 L238.8 150.4 L237.6 151.4 L239.0 152.0 L241.0 153.0 L242.5 153.4 L241.3 154.4 L238.2 154.9 L243.5 155.7 L245.0 156.2 L243.8 156.7 L238.3 157.0 L240.2 157.9 L241.7 158.5 L240.5 159.4 L236.2 159.9 L242.6 160.5 L244.1 160.8 L242.9 161.7 L238.0 162.0 L237.4 162.6 L238.9 163.0 L237.7 163.5 L236.9 163.8 L237.1 164.3 L238.6 164.9 L237.4 165.3 L235.3 165.7 L233.2 166.8 L234.7 167.4 L233.5 167.9 L233.2 168.3 L233.5 168.9 L235.0 169.6 L233.8 170.4 L232.2 170.8 L232.5 171.8 L234.0 172.2 L232.8 172.6 L226.9 172.9 L231.9 173.4 L233.4 174.1 L232.2 174.9 L223.2 175.2 L226.0 171.1 L219.1 171.3 L212.2 172.2 L205.2 172.7 L198.3 173.0 L191.4 173.5 L184.5 173.4 L177.5 173.7 L170.6 173.5 L163.7 173.7 L156.8 173.8 L149.8 173.9 L142.9 174.0 L136.0 174.4 L129.1 173.9 L122.2 173.9 L115.2 173.9 L108.3 174.4 L101.4 174.0 L94.5 173.6 L87.5 174.2 L80.6 174.2 L73.7 174.1 L66.8 173.7 L59.8 174.0 L52.9 173.6 L46.0 173.4 L47.0 174.9 L45.5 174.6 L46.7 173.6 L48.4 173.3 L45.9 173.0 L44.4 172.6 L45.6 172.2 L47.7 171.9 L46.0 170.8 L44.5 170.3 L45.7 169.6 L47.0 169.2 L45.7 168.3 L44.2 167.8 L45.4 167.1 L46.9 166.6 L46.2 166.0 L44.7 165.6 L45.9 164.5 L49.1 164.1 L46.8 163.2 L45.3 162.8 L46.5 162.2 L49.3 161.7 L46.9 160.7 L45.4 160.4 L46.6 160.0 L48.3 159.8 L47.6 159.4 L46.1 158.7 L47.3 157.7 L50.6 157.2 L45.3 156.8 L43.8 156.5 L45.0 155.6 L49.8 155.2 L47.6 154.6 L46.1 154.0 L47.3 152.9 L51.2 152.4 L45.8 151.7 L44.3 151.2 L45.5 150.9 L50.1 150.6 L48.4 149.6 L46.9 149.2 L48.1 148.6 L51.8 148.1 L46.9 147.3 L45.4 146.9 L46.6 146.4 L50.8 146.1 L48.1 145.7 L46.6 145.1 L47.8 144.6 L49.1 144.2 L49.1 143.3 L47.6 142.8 L48.8 142.0 L49.7 141.6 L45.4 141.0 L43.9 140.5 L45.1 139.8 L49.6 139.6 L46.8 139.1 L45.3 138.4 L46.5 137.9 L50.2 137.5 L47.8 136.9 L46.3 136.6 L47.5 135.8 L48.8 135.5 L47.7 134.5 L46.2 134.2 L47.4 133.5 L50.5 133.2 L45.8 132.7 L44.3 132.2 L45.5 131.5 L49.2 130.9 L46.1 129.8 L44.6 129.2 L45.8 128.3 L49.3 128.0 L47.4 127.0 L45.9 126.5 L47.1 125.6 L48.5 125.3 L47.1 125.0 L45.6 124.5 L46.8 123.5 L48.0 122.9 L46.5 121.9 L45.0 121.4 L46.2 121.1 L48.1 120.9 L48.5 120.3 L47.0 119.9 L48.2 119.2 L50.8 118.7 L49.8 118.3 L48.3 117.6 L49.5 116.9 L48.8 116.6 L49.0 115.4 L47.5 114.8 L48.7 114.3 L51.8 113.9 L51.0 113.5 L49.5 112.9 L50.7 111.9 L51.8 111.5Z" fill="#e9b9ae"/><g fill="#fff" opacity="0.85"><rect x="136.6" y="117.5" width="6.2" height="0.5" rx="0.3"/><rect x="202.6" y="169.5" width="7.7" height="0.8" rx="0.3"/><rect x="198.9" y="118.1" width="7.9" height="0.8" rx="0.3"/><rect x="117.7" y="166.8" width="11.1" height="0.8" rx="0.3"/><rect x="141.8" y="120.2" width="8.6" height="0.6" rx="0.3"/><rect x="123.1" y="170.4" width="10.2" height="0.7" rx="0.3"/><rect x="180.4" y="119.6" width="9.1" height="0.8" rx="0.3"/><rect x="116.3" y="167.1" width="5.6" height="0.5" rx="0.3"/><rect x="66.6" y="116.3" width="11.8" height="0.7" rx="0.3"/></g><path d="M50.0 236.4 L57.2 236.4 L64.5 236.3 L71.7 235.8 L78.9 235.6 L86.2 235.8 L93.4 235.6 L100.6 235.9 L107.8 235.7 L115.1 235.6 L122.3 235.6 L129.5 235.6 L136.8 235.2 L144.0 235.4 L151.2 235.1 L158.5 235.6 L165.7 235.0 L172.9 235.5 L180.2 234.9 L187.4 235.4 L194.6 235.2 L201.8 235.3 L209.1 235.6 L216.3 235.1 L223.5 235.2 L230.8 236.8 L238.0 237.7 L232.5 236.0 L234.0 236.3 L232.8 236.9 L236.0 237.2 L243.3 238.1 L244.8 238.4 L243.6 239.3 L236.7 239.7 L237.4 240.5 L238.9 240.8 L237.7 241.7 L234.7 242.3 L238.9 243.2 L240.4 243.7 L239.2 244.1 L234.8 244.4 L234.5 245.2 L236.0 245.4 L234.8 246.4 L233.0 246.7 L233.6 247.2 L235.1 247.5 L233.9 248.3 L233.4 248.6 L239.3 248.9 L240.8 249.2 L239.6 249.8 L235.5 250.1 L237.3 250.8 L238.8 251.5 L237.6 252.0 L236.2 252.5 L239.1 253.0 L240.6 253.2 L239.4 253.8 L237.4 254.3 L240.1 254.8 L241.6 255.5 L240.4 256.6 L239.2 257.0 L241.2 257.6 L242.7 258.1 L241.5 258.6 L239.3 259.0 L237.6 259.9 L239.1 260.2 L237.9 260.7 L241.0 261.3 L242.7 262.4 L244.2 263.0 L243.0 263.5 L241.6 263.8 L241.5 264.7 L243.0 265.3 L241.8 266.0 L240.8 266.3 L241.9 267.5 L243.4 268.1 L242.2 269.2 L240.5 269.7 L241.6 270.5 L243.1 271.0 L241.9 271.6 L239.0 272.0 L237.3 272.8 L238.8 273.4 L237.6 274.4 L239.0 275.0 L241.0 276.0 L242.5 276.4 L241.3 277.4 L238.2 277.9 L243.5 278.7 L245.0 279.2 L243.8 279.7 L238.3 280.0 L240.2 280.9 L241.7 281.5 L240.5 282.4 L236.2 282.9 L242.6 283.5 L244.1 283.8 L242.9 284.7 L238.0 285.0 L237.4 285.6 L238.9 286.0 L237.7 286.5 L236.9 286.8 L237.1 287.3 L238.6 287.9 L237.4 288.3 L235.3 288.7 L233.2 289.8 L234.7 290.4 L233.5 290.9 L233.2 291.3 L233.5 291.9 L235.0 292.6 L233.8 293.4 L232.2 293.8 L232.5 294.8 L234.0 295.2 L232.8 295.6 L226.9 295.9 L231.9 296.4 L233.4 297.1 L232.2 297.9 L223.2 298.2 L226.0 294.1 L219.1 294.3 L212.2 295.2 L205.2 295.7 L198.3 296.0 L191.4 296.5 L184.5 296.4 L177.5 296.7 L170.6 296.5 L163.7 296.7 L156.8 296.8 L149.8 296.9 L142.9 297.0 L136.0 297.4 L129.1 296.9 L122.2 296.9 L115.2 296.9 L108.3 297.4 L101.4 297.0 L94.5 296.6 L87.5 297.2 L80.6 297.2 L73.7 297.1 L66.8 296.7 L59.8 297.0 L52.9 296.6 L46.0 296.4 L47.0 297.9 L45.5 297.6 L46.7 296.6 L48.4 296.3 L45.9 296.0 L44.4 295.6 L45.6 295.2 L47.7 294.9 L46.0 293.8 L44.5 293.3 L45.7 292.6 L47.0 292.2 L45.7 291.3 L44.2 290.8 L45.4 290.1 L46.9 289.6 L46.2 289.0 L44.7 288.6 L45.9 287.5 L49.1 287.1 L46.8 286.2 L45.3 285.8 L46.5 285.2 L49.3 284.7 L46.9 283.7 L45.4 283.4 L46.6 283.0 L48.3 282.8 L47.6 282.4 L46.1 281.7 L47.3 280.7 L50.6 280.2 L45.3 279.8 L43.8 279.5 L45.0 278.6 L49.8 278.2 L47.6 277.6 L46.1 277.0 L47.3 275.9 L51.2 275.4 L45.8 274.7 L44.3 274.2 L45.5 273.9 L50.1 273.6 L48.4 272.6 L46.9 272.2 L48.1 271.6 L51.8 271.1 L46.9 270.3 L45.4 269.9 L46.6 269.4 L50.8 269.1 L48.1 268.7 L46.6 268.1 L47.8 267.6 L49.1 267.2 L49.1 266.3 L47.6 265.8 L48.8 265.0 L49.7 264.6 L45.4 264.0 L43.9 263.5 L45.1 262.8 L49.6 262.6 L46.8 262.1 L45.3 261.4 L46.5 260.9 L50.2 260.5 L47.8 259.9 L46.3 259.6 L47.5 258.8 L48.8 258.5 L47.7 257.5 L46.2 257.2 L47.4 256.5 L50.5 256.2 L45.8 255.7 L44.3 255.2 L45.5 254.5 L49.2 253.9 L46.1 252.8 L44.6 252.2 L45.8 251.3 L49.3 251.0 L47.4 250.0 L45.9 249.5 L47.1 248.6 L48.5 248.3 L47.1 248.0 L45.6 247.5 L46.8 246.5 L48.0 245.9 L46.5 244.9 L45.0 244.4 L46.2 244.1 L48.1 243.9 L48.5 243.3 L47.0 242.9 L48.2 242.2 L50.8 241.7 L49.8 241.3 L48.3 240.6 L49.5 239.9 L48.8 239.6 L49.0 238.4 L47.5 237.8 L48.7 237.3 L51.8 236.9 L51.0 236.5 L49.5 235.9 L50.7 234.9 L51.8 234.5Z" fill="#f3c878"/><g fill="#fff" opacity="0.85"><rect x="136.6" y="240.5" width="6.2" height="0.5" rx="0.3"/><rect x="202.6" y="292.5" width="7.7" height="0.8" rx="0.3"/><rect x="198.9" y="241.1" width="7.9" height="0.8" rx="0.3"/><rect x="117.7" y="289.8" width="11.1" height="0.8" rx="0.3"/><rect x="141.8" y="243.2" width="8.6" height="0.6" rx="0.3"/><rect x="123.1" y="293.4" width="10.2" height="0.7" rx="0.3"/><rect x="180.4" y="242.6" width="9.1" height="0.8" rx="0.3"/><rect x="116.3" y="290.1" width="5.6" height="0.5" rx="0.3"/><rect x="66.6" y="239.3" width="11.8" height="0.7" rx="0.3"/></g><path d="M55.5 55.2 L62.3 55.0 L69.1 55.1 L75.9 54.6 L82.7 54.4 L89.4 54.3 L96.2 53.8 L103.0 53.8 L109.8 53.6 L116.6 53.5 L123.4 52.7 L130.2 52.6 L137.0 52.3 L143.8 52.7 L150.5 52.5 L157.3 52.0 L164.1 52.5 L170.9 52.4 L177.7 52.1 L184.5 52.3 L191.3 52.2 L198.1 52.3 L204.8 52.9 L211.6 52.8 L218.4 53.5 L225.2 54.5 L232.0 55.3 L231.6 52.8 L233.1 53.4 L231.9 54.1 L230.2 54.6 L235.0 55.5 L236.5 56.2 L235.3 57.3 L233.2 57.8 L238.3 58.4 L239.8 59.0 L238.6 59.6 L235.9 60.2 L236.8 61.3 L238.3 61.7 L237.1 62.7 L234.7 63.1 L236.8 63.7 L238.3 64.1 L237.1 64.5 L235.2 64.8 L239.6 65.8 L241.1 66.1 L239.9 67.0 L236.8 67.3 L241.1 68.0 L242.6 68.5 L241.4 68.9 L238.2 69.3 L239.6 69.8 L241.1 70.2 L239.9 71.2 L237.9 71.5 L238.8 72.6 L240.3 73.3 L239.1 73.7 L237.2 74.1 L240.5 74.6 L242.0 75.2 L240.8 75.7 L238.7 76.1 L240.0 76.8 L241.5 77.3 L240.3 78.3 L239.6 78.6 L239.8 79.7 L241.3 80.0 L240.1 80.9 L239.6 81.5 L240.5 82.7 L242.0 83.1 L240.8 83.5 L237.4 83.7 L240.0 84.2 L241.5 84.8 L240.3 85.6 L239.9 85.9 L241.7 86.9 L243.2 87.5 L242.0 88.3 L237.8 88.6 L242.0 89.1 L243.5 89.4 L242.3 89.8 L239.1 90.2 L239.3 90.6 L240.8 91.1 L239.6 92.0 L240.5 92.4 L243.9 92.7 L245.4 93.4 L244.2 93.7 L239.7 94.2 L244.4 95.2 L245.9 95.6 L244.7 96.5 L239.2 97.1 L241.8 98.0 L243.3 98.4 L242.1 99.3 L238.5 99.8 L241.3 100.5 L242.8 101.0 L241.6 101.8 L239.0 102.2 L237.2 103.0 L238.7 103.7 L237.5 104.6 L236.2 104.9 L238.1 105.7 L239.6 106.3 L238.4 106.6 L234.0 107.1 L238.0 107.6 L239.5 108.1 L238.3 109.2 L237.9 109.5 L227.9 110.0 L229.4 110.4 L228.2 111.4 L227.1 111.8 L222.8 113.0 L224.3 113.4 L223.1 114.3 L218.0 114.9 L222.0 111.6 L215.5 112.4 L208.9 113.3 L202.4 114.2 L195.8 114.5 L189.3 114.5 L182.8 114.4 L176.2 114.6 L169.7 114.1 L163.2 114.1 L156.6 114.3 L150.1 114.2 L143.5 114.2 L137.0 114.3 L130.5 114.4 L123.9 114.2 L117.4 114.0 L110.8 114.3 L104.3 114.4 L97.8 113.9 L91.2 113.5 L84.7 113.3 L78.2 113.9 L71.6 113.2 L65.1 113.6 L58.5 113.4 L52.0 113.1 L54.3 113.2 L52.8 112.9 L54.0 112.2 L56.0 112.0 L51.6 111.5 L50.1 111.1 L51.3 110.2 L54.7 109.8 L50.9 108.6 L49.4 108.2 L50.6 107.7 L51.8 107.5 L48.0 106.6 L46.5 106.0 L47.7 105.3 L51.8 104.8 L47.9 104.2 L46.4 103.9 L47.6 102.9 L49.0 102.4 L46.7 101.7 L45.2 101.2 L46.4 100.5 L49.7 99.9 L45.6 98.8 L44.1 98.4 L45.3 97.6 L47.8 97.0 L47.5 96.1 L46.0 95.4 L47.2 94.7 L46.0 94.2 L44.5 93.0 L43.0 92.7 L44.2 92.1 L46.6 91.7 L40.0 90.9 L38.5 90.3 L39.7 89.9 L46.1 89.6 L41.0 89.1 L39.5 88.5 L40.7 87.6 L45.1 87.1 L42.6 85.9 L41.1 85.5 L42.3 84.6 L45.6 84.2 L44.7 83.1 L43.2 82.7 L44.4 81.7 L45.0 81.2 L44.0 80.1 L42.5 79.6 L43.7 79.1 L45.5 78.7 L39.1 77.9 L37.6 77.5 L38.8 76.5 L44.9 76.1 L40.1 75.2 L38.6 74.5 L39.8 73.4 L44.2 73.1 L44.8 72.7 L43.3 72.3 L44.5 71.7 L44.4 71.4 L39.1 70.3 L37.6 70.0 L38.8 69.5 L43.7 69.0 L43.5 68.4 L42.0 67.8 L43.2 67.4 L43.6 67.0 L43.1 66.5 L41.6 66.1 L42.8 65.5 L43.4 65.1 L43.6 64.6 L42.1 64.1 L43.3 63.1 L46.4 62.7 L44.7 62.2 L43.2 61.5 L44.4 60.9 L48.0 60.6 L45.8 60.1 L44.3 59.8 L45.5 59.3 L47.2 58.8 L48.8 58.4 L47.3 57.8 L48.5 57.4 L50.7 57.1 L53.0 56.8 L51.5 56.1 L52.7 55.7 L53.3 55.3 L54.6 54.5 L53.1 54.2 L54.3 53.9 L55.7 53.6 L56.5 52.9 L55.0 52.5 L56.2 52.1 L58.9 51.5Z" fill="#e98b8b"/><g fill="#fff" opacity="0.85"><rect x="74.8" y="59.8" width="3.6" height="0.7" rx="0.3"/><rect x="178.5" y="107.3" width="5.9" height="0.7" rx="0.3"/><rect x="126.7" y="55.6" width="8.4" height="0.8" rx="0.3"/><rect x="190.9" y="107.3" width="4.6" height="0.8" rx="0.3"/><rect x="122.8" y="56.2" width="4.8" height="0.7" rx="0.3"/><rect x="62.4" y="109.0" width="11.0" height="0.8" rx="0.3"/><rect x="193.4" y="57.3" width="8.7" height="0.7" rx="0.3"/><rect x="138.2" y="109.0" width="11.8" height="0.6" rx="0.3"/><rect x="201.3" y="59.0" width="9.7" height="0.8" rx="0.3"/></g><path d="M55.5 178.2 L62.3 178.0 L69.1 178.1 L75.9 177.6 L82.7 177.4 L89.4 177.3 L96.2 176.8 L103.0 176.8 L109.8 176.6 L116.6 176.5 L123.4 175.7 L130.2 175.6 L137.0 175.3 L143.8 175.7 L150.5 175.5 L157.3 175.0 L164.1 175.5 L170.9 175.4 L177.7 175.1 L184.5 175.3 L191.3 175.2 L198.1 175.3 L204.8 175.9 L211.6 175.8 L218.4 176.5 L225.2 177.5 L232.0 178.3 L231.6 175.8 L233.1 176.4 L231.9 177.1 L230.2 177.6 L235.0 178.5 L236.5 179.2 L235.3 180.3 L233.2 180.8 L238.3 181.4 L239.8 182.0 L238.6 182.6 L235.9 183.2 L236.8 184.3 L238.3 184.7 L237.1 185.7 L234.7 186.1 L236.8 186.7 L238.3 187.1 L237.1 187.5 L235.2 187.8 L239.6 188.8 L241.1 189.1 L239.9 190.0 L236.8 190.3 L241.1 191.0 L242.6 191.5 L241.4 191.9 L238.2 192.3 L239.6 192.8 L241.1 193.2 L239.9 194.2 L237.9 194.5 L238.8 195.6 L240.3 196.3 L239.1 196.7 L237.2 197.1 L240.5 197.6 L242.0 198.2 L240.8 198.7 L238.7 199.1 L240.0 199.8 L241.5 200.3 L240.3 201.3 L239.6 201.6 L239.8 202.7 L241.3 203.0 L240.1 203.9 L239.6 204.5 L240.5 205.7 L242.0 206.1 L240.8 206.5 L237.4 206.7 L240.0 207.2 L241.5 207.8 L240.3 208.6 L239.9 208.9 L241.7 209.9 L243.2 210.5 L242.0 211.3 L237.8 211.6 L242.0 212.1 L243.5 212.4 L242.3 212.8 L239.1 213.2 L239.3 213.6 L240.8 214.1 L239.6 215.0 L240.5 215.4 L243.9 215.7 L245.4 216.4 L244.2 216.7 L239.7 217.2 L244.4 218.2 L245.9 218.6 L244.7 219.5 L239.2 220.1 L241.8 221.0 L243.3 221.4 L242.1 222.3 L238.5 222.8 L241.3 223.5 L242.8 224.0 L241.6 224.8 L239.0 225.2 L237.2 226.0 L238.7 226.7 L237.5 227.6 L236.2 227.9 L238.1 228.7 L239.6 229.3 L238.4 229.6 L234.0 230.1 L238.0 230.6 L239.5 231.1 L238.3 232.2 L237.9 232.5 L227.9 233.0 L229.4 233.4 L228.2 234.4 L227.1 234.8 L222.8 236.0 L224.3 236.4 L223.1 237.3 L218.0 237.9 L222.0 234.6 L215.5 235.4 L208.9 236.3 L202.4 237.2 L195.8 237.5 L189.3 237.5 L182.8 237.4 L176.2 237.6 L169.7 237.1 L163.2 237.1 L156.6 237.3 L150.1 237.2 L143.5 237.2 L137.0 237.3 L130.5 237.4 L123.9 237.2 L117.4 237.0 L110.8 237.3 L104.3 237.4 L97.8 236.9 L91.2 236.5 L84.7 236.3 L78.2 236.9 L71.6 236.2 L65.1 236.6 L58.5 236.4 L52.0 236.1 L54.3 236.2 L52.8 235.9 L54.0 235.2 L56.0 235.0 L51.6 234.5 L50.1 234.1 L51.3 233.2 L54.7 232.8 L50.9 231.6 L49.4 231.2 L50.6 230.7 L51.8 230.5 L48.0 229.6 L46.5 229.0 L47.7 228.3 L51.8 227.8 L47.9 227.2 L46.4 226.9 L47.6 225.9 L49.0 225.4 L46.7 224.7 L45.2 224.2 L46.4 223.5 L49.7 222.9 L45.6 221.8 L44.1 221.4 L45.3 220.6 L47.8 220.0 L47.5 219.1 L46.0 218.4 L47.2 217.7 L46.0 217.2 L44.5 216.0 L43.0 215.7 L44.2 215.1 L46.6 214.7 L40.0 213.9 L38.5 213.3 L39.7 212.9 L46.1 212.6 L41.0 212.1 L39.5 211.5 L40.7 210.6 L45.1 210.1 L42.6 208.9 L41.1 208.5 L42.3 207.6 L45.6 207.2 L44.7 206.1 L43.2 205.7 L44.4 204.7 L45.0 204.2 L44.0 203.1 L42.5 202.6 L43.7 202.1 L45.5 201.7 L39.1 200.9 L37.6 200.5 L38.8 199.5 L44.9 199.1 L40.1 198.2 L38.6 197.5 L39.8 196.4 L44.2 196.1 L44.8 195.7 L43.3 195.3 L44.5 194.7 L44.4 194.4 L39.1 193.3 L37.6 193.0 L38.8 192.5 L43.7 192.0 L43.5 191.4 L42.0 190.8 L43.2 190.4 L43.6 190.0 L43.1 189.5 L41.6 189.1 L42.8 188.5 L43.4 188.1 L43.6 187.6 L42.1 187.1 L43.3 186.1 L46.4 185.7 L44.7 185.2 L43.2 184.5 L44.4 183.9 L48.0 183.6 L45.8 183.1 L44.3 182.8 L45.5 182.3 L47.2 181.8 L48.8 181.4 L47.3 180.8 L48.5 180.4 L50.7 180.1 L53.0 179.8 L51.5 179.1 L52.7 178.7 L53.3 178.3 L54.6 177.5 L53.1 177.2 L54.3 176.9 L55.7 176.6 L56.5 175.9 L55.0 175.5 L56.2 175.1 L58.9 174.5Z" fill="#b9cfd5"/><g fill="#fff" opacity="0.85"><rect x="74.8" y="182.8" width="3.6" height="0.7" rx="0.3"/><rect x="178.5" y="230.3" width="5.9" height="0.7" rx="0.3"/><rect x="126.7" y="178.6" width="8.4" height="0.8" rx="0.3"/><rect x="190.9" y="230.3" width="4.6" height="0.8" rx="0.3"/><rect x="122.8" y="179.2" width="4.8" height="0.7" rx="0.3"/><rect x="62.4" y="232.0" width="11.0" height="0.8" rx="0.3"/><rect x="193.4" y="180.3" width="8.7" height="0.7" rx="0.3"/><rect x="138.2" y="232.0" width="11.8" height="0.6" rx="0.3"/><rect x="201.3" y="182.0" width="9.7" height="0.8" rx="0.3"/></g></svg><span class="t" style="left:89.00px;top:25.99px;font-size:5.5px;line-height:8px;color:#5a5a5a;font-weight:normal;font-family:'Liberation Sans',sans-serif;letter-spacing:0.259px;-webkit-text-stroke:0.22px #5a5a5a;">5TH ANNUAL PAINT &amp; SIP FUNDRAISER</span><span class="t" style="left:74.20px;top:60.43px;font-size:36px;line-height:47px;color:#fff;font-weight:normal;font-family:'Liberation Sans',sans-serif;letter-spacing:7.664px;-webkit-text-stroke:1.2px #fff;">PAINT</span><span class="t" style="left:96.40px;top:120.83px;font-size:36px;line-height:47px;color:#fff;font-weight:normal;font-family:'Liberation Sans',sans-serif;letter-spacing:8.592px;-webkit-text-stroke:1.2px #fff;">AND</span><span class="t" style="left:106.80px;top:183.13px;font-size:36px;line-height:47px;color:#fff;font-weight:normal;font-family:'Liberation Sans',sans-serif;letter-spacing:4.284px;-webkit-text-stroke:1.2px #fff;">SIP</span><span class="t" style="left:67.50px;top:241.93px;font-size:36px;line-height:47px;color:#fff;font-weight:normal;font-family:'Liberation Sans',sans-serif;letter-spacing:5.642px;-webkit-text-stroke:1.2px #fff;">EVENT</span><span class="t" style="left:76.50px;top:318.59px;font-size:5.5px;line-height:8px;color:#5a5a5a;font-weight:normal;font-family:'Liberation Sans',sans-serif;letter-spacing:0.183px;-webkit-text-stroke:0.22px #5a5a5a;">BENEFITING A REALLY AWESOME FUNDRAISER</span><span class="t" style="left:95.20px;top:329.09px;font-size:5.5px;line-height:8px;color:#5a5a5a;font-weight:normal;font-family:'Liberation Sans',sans-serif;letter-spacing:0.272px;-webkit-text-stroke:0.22px #5a5a5a;">SATURDAY AUGUST 21ST AT 7PM</span><span class="t" style="left:78.50px;top:340.09px;font-size:5.5px;line-height:8px;color:#5a5a5a;font-weight:normal;font-family:'Liberation Sans',sans-serif;letter-spacing:0.297px;-webkit-text-stroke:0.22px #5a5a5a;">NATALIE'S BISTRO | SEATTLE, WASHINGTON</span></div></div><div class="a" style="left:14.80px;top:231.00px;width:85.00px;height:109.50px;background:#fff;box-shadow:0 0 2px rgba(0,0,0,.3)"><div class="a" style="left:2.9px;top:2px;width:79.8px;height:104.5px;background:#fdc51f"></div></div><span class="t" style="left:25.20px;top:240.10px;font-size:15px;line-height:20px;color:#1f4f7d;font-weight:bold;font-family:'Liberation Sans',sans-serif;letter-spacing:0.000px;-webkit-text-stroke:0.4px #1f4f7d;transform:scaleX(1.4267);transform-origin:0 0;">WASH</span><span class="t" style="left:25.20px;top:255.08px;font-size:6.4px;line-height:9px;color:#1f4f7d;font-weight:bold;font-family:'Liberation Sans',sans-serif;letter-spacing:0.000px;-webkit-text-stroke:0.2px #1f4f7d;transform:scaleX(1.4941);transform-origin:0 0;">YOUR HANDS</span><span class="t" style="left:25.70px;top:321.18px;font-size:3.8px;line-height:5px;color:#1f4f7d;font-weight:bold;font-family:'Liberation Sans',sans-serif;letter-spacing:0.247px;">Remember to wash your hands</span><span class="t" style="left:34.90px;top:325.68px;font-size:3.8px;line-height:5px;color:#1f4f7d;font-weight:bold;font-family:'Liberation Sans',sans-serif;letter-spacing:0.132px;">for at least 20 seconds</span><svg style="left:36px;top:269px" width="42" height="45" viewBox="0 0 42 45" fill="none" stroke="#27507a" stroke-width="0.55" stroke-linecap="round" stroke-linejoin="round">
<circle cx="4.5" cy="4.8" r="2.3"/><circle cx="11" cy="3" r="1.8"/><circle cx="6" cy="11" r="3"/><circle cx="12.5" cy="14.5" r="3.6"/><circle cx="18.5" cy="8.5" r="2.8"/>
<path d="M1 40 C3 31 7 23 12 19 C15 16 18 13 20 12 C22 12 22 14 20 16 L14 23"/>
<path d="M16 22 L24 12.5 C26 11 28 12.5 26.5 14.5 L20 23.5"/>
<path d="M21 22.5 L28.5 14.5 C30.5 13 32.5 15 31 17 L24 26"/>
<path d="M25 26 L32 19 C34 17.5 36 19.5 34.5 21.5 L28 29"/>
<path d="M29 29 L38 37 C39 38 40 39.5 41 42"/>
<path d="M14 30 C17 31 21 31 24 34 C27 37 30 40 33 44"/>
<path d="M13 30 C11 32 12 35 15 36 L24 40 L21 44"/>
</svg><div class="a" style="left:110.00px;top:231.00px;width:85.00px;height:108.50px;background:#2a125a;overflow:hidden"><svg style="left:0;top:0" width="85" height="109" viewBox="0 0 85 109"><defs><pattern id="jd" width="3" height="3" patternUnits="userSpaceOnUse"><rect x="0" y="0" width="0.9" height="0.9" fill="#b9a9e8"/><rect x="1.5" y="1.5" width="0.9" height="0.9" fill="#b9a9e8"/></pattern><linearGradient id="jf" x1="0" y1="0" x2="0" y2="1"><stop offset="0" stop-color="#fff" stop-opacity=".55"/><stop offset="1" stop-color="#fff" stop-opacity="0"/></linearGradient><mask id="jm"><rect width="85" height="34" fill="url(#jf)"/></mask></defs><rect width="85" height="109" fill="#2a125a"/><path d="M85 6 L68 24 L46 62 L38 70 L60 72 L85 34 Z" fill="#33196b"/><path d="M85 34 L62 70 C70 80 70 96 60 109 L85 109 Z" fill="#220e4c"/><path d="M46 62 C34 64 25 72 25 84 C25 96 33 104 38 109 L60 109 C70 96 70 80 62 70 Z" fill="#1f0c47"/><ellipse cx="37" cy="79" rx="9.5" ry="10.5" fill="#160834"/><rect width="85" height="34" fill="url(#jd)" mask="url(#jm)"/></svg></div><span class="t" style="left:119.50px;top:264.30px;font-size:9.8px;line-height:13px;color:#e4dfe0;font-weight:bold;font-family:'Liberation Sans',sans-serif;letter-spacing:0.000px;transform:scaleX(0.6442);transform-origin:0 0;">TWILIGHT</span><span class="t" style="left:131.00px;top:274.60px;font-size:9.8px;line-height:13px;color:#e4dfe0;font-weight:bold;font-family:'Liberation Sans',sans-serif;letter-spacing:0.000px;transform:scaleX(0.5940);transform-origin:0 0;">JAZZ QUARTET</span><span class="t" style="left:131.50px;top:292.36px;font-size:3px;line-height:4px;color:#d98b46;font-weight:bold;font-family:'Liberation Sans',sans-serif;letter-spacing:-0.207px;">Live Music at Night Owl</span><div class="a" style="left:131.50px;top:320.50px;width:22.00px;height:1.50px;background:#c97a3a"></div><div class="a" style="left:131.50px;top:324.20px;width:14.50px;height:1.30px;background:#d4cfd6"></div><div class="a" style="left:131.50px;top:327.50px;width:9.50px;height:1.30px;background:#d4cfd6"></div><div class="a" style="left:15.00px;top:350.70px;width:84.50px;height:104.00px;background:#fff200;overflow:hidden"><svg style="left:0;top:0" width="85" height="104" viewBox="0 0 85 104" fill="none" stroke="#f0562a" stroke-width="1.15" stroke-linecap="round"><path transform="translate(-2.6 -1.3) rotate(10)" d="M-4 0 q1 -2.4 2 0 t2 0 t2 0 t2 0"/><path transform="translate(6.0 -2.8) rotate(12)" d="M-4 0 q1 -2.4 2 0 t2 0 t2 0 t2 0"/><path transform="translate(12.2 -2.1) rotate(126)" d="M-4 0 q1 -2.4 2 0 t2 0 t2 0 t2 0"/><path transform="translate(20.4 -2.8) rotate(127)" d="M-4 0 q1 -2.4 2 0 t2 0 t2 0 t2 0"/><path transform="translate(28.8 -0.9) rotate(10)" d="M-4 0 q1 -2.4 2 0 t2 0 t2 0 t2 0"/><path transform="translate(38.9 -3.1) rotate(99)" d="M-4 0 q1 -2.4 2 0 t2 0 t2 0 t2 0"/><path transform="translate(44.7 -0.9) rotate(138)" d="M-4 0 q1 -2.4 2 0 t2 0 t2 0 t2 0"/><path transform="translate(55.8 -3.0) rotate(84)" d="M-4 0 q1 -2.4 2 0 t2 0 t2 0 t2 0"/><path transform="translate(64.0 -1.9) rotate(120)" d="M-4 0 q1 -2.4 2 0 t2 0 t2 0 t2 0"/><path transform="translate(72.2 -2.9) rotate(14)" d="M-4 0 q1 -2.4 2 0 t2 0 t2 0 t2 0"/><path transform="translate(78.6 -3.0) rotate(83)" d="M-4 0 q1 -2.4 2 0 t2 0 t2 0 t2 0"/><path transform="translate(86.7 -1.0) rotate(3)" d="M-4 0 q1 -2.4 2 0 t2 0 t2 0 t2 0"/><path transform="translate(1.6 4.3) rotate(160)" d="M-4 0 q1 -2.4 2 0 t2 0 t2 0 t2 0"/><path transform="translate(9.1 5.0) rotate(109)" d="M-4 0 q1 -2.4 2 0 t2 0 t2 0 t2 0"/><path transform="translate(16.4 4.9) rotate(13)" d="M-4 0 q1 -2.4 2 0 t2 0 t2 0 t2 0"/><path transform="translate(25.2 5.3) rotate(16)" d="M-4 0 q1 -2.4 2 0 t2 0 t2 0 t2 0"/><path transform="translate(34.0 4.1) rotate(6)" d="M-4 0 q1 -2.4 2 0 t2 0 t2 0 t2 0"/><path transform="translate(42.4 7.0) rotate(48)" d="M-4 0 q1 -2.4 2 0 t2 0 t2 0 t2 0"/><path transform="translate(51.5 6.9) rotate(150)" d="M-4 0 q1 -2.4 2 0 t2 0 t2 0 t2 0"/><path transform="translate(59.6 4.9) rotate(98)" d="M-4 0 q1 -2.4 2 0 t2 0 t2 0 t2 0"/><path transform="translate(67.3 6.5) rotate(46)" d="M-4 0 q1 -2.4 2 0 t2 0 t2 0 t2 0"/><path transform="translate(76.1 4.4) rotate(150)" d="M-4 0 q1 -2.4 2 0 t2 0 t2 0 t2 0"/><path transform="translate(82.6 4.5) rotate(73)" d="M-4 0 q1 -2.4 2 0 t2 0 t2 0 t2 0"/><path transform="translate(-2.9 12.6) rotate(144)" d="M-4 0 q1 -2.4 2 0 t2 0 t2 0 t2 0"/><path transform="translate(6.1 13.6) rotate(75)" d="M-4 0 q1 -2.4 2 0 t2 0 t2 0 t2 0"/><path transform="translate(79.7 14.5) rotate(8)" d="M-4 0 q1 -2.4 2 0 t2 0 t2 0 t2 0"/><path transform="translate(87.0 12.1) rotate(14)" d="M-4 0 q1 -2.4 2 0 t2 0 t2 0 t2 0"/><path transform="translate(0.9 22.3) rotate(104)" d="M-4 0 q1 -2.4 2 0 t2 0 t2 0 t2 0"/><path transform="translate(9.1 20.8) rotate(149)" d="M-4 0 q1 -2.4 2 0 t2 0 t2 0 t2 0"/><path transform="translate(75.7 21.6) rotate(8)" d="M-4 0 q1 -2.4 2 0 t2 0 t2 0 t2 0"/><path transform="translate(82.6 21.4) rotate(70)" d="M-4 0 q1 -2.4 2 0 t2 0 t2 0 t2 0"/><path transform="translate(-3.7 29.8) rotate(74)" d="M-4 0 q1 -2.4 2 0 t2 0 t2 0 t2 0"/><path transform="translate(4.7 27.4) rotate(-1)" d="M-4 0 q1 -2.4 2 0 t2 0 t2 0 t2 0"/><path transform="translate(78.5 27.3) rotate(81)" d="M-4 0 q1 -2.4 2 0 t2 0 t2 0 t2 0"/><path transform="translate(86.8 29.5) rotate(66)" d="M-4 0 q1 -2.4 2 0 t2 0 t2 0 t2 0"/><path transform="translate(1.7 36.7) rotate(94)" d="M-4 0 q1 -2.4 2 0 t2 0 t2 0 t2 0"/><path transform="translate(76.2 35.0) rotate(78)" d="M-4 0 q1 -2.4 2 0 t2 0 t2 0 t2 0"/><path transform="translate(84.4 35.9) rotate(-3)" d="M-4 0 q1 -2.4 2 0 t2 0 t2 0 t2 0"/><path transform="translate(-3.4 44.1) rotate(43)" d="M-4 0 q1 -2.4 2 0 t2 0 t2 0 t2 0"/><path transform="translate(4.4 44.8) rotate(-4)" d="M-4 0 q1 -2.4 2 0 t2 0 t2 0 t2 0"/><path transform="translate(79.1 43.5) rotate(93)" d="M-4 0 q1 -2.4 2 0 t2 0 t2 0 t2 0"/><path transform="translate(87.4 45.0) rotate(93)" d="M-4 0 q1 -2.4 2 0 t2 0 t2 0 t2 0"/><path transform="translate(0.6 52.4) rotate(-4)" d="M-4 0 q1 -2.4 2 0 t2 0 t2 0 t2 0"/><path transform="translate(8.7 52.4) rotate(85)" d="M-4 0 q1 -2.4 2 0 t2 0 t2 0 t2 0"/><path transform="translate(82.4 52.5) rotate(89)" d="M-4 0 q1 -2.4 2 0 t2 0 t2 0 t2 0"/><path transform="translate(-4.1 59.2) rotate(102)" d="M-4 0 q1 -2.4 2 0 t2 0 t2 0 t2 0"/><path transform="translate(3.8 57.7) rotate(5)" d="M-4 0 q1 -2.4 2 0 t2 0 t2 0 t2 0"/><path transform="translate(78.4 58.9) rotate(153)" d="M-4 0 q1 -2.4 2 0 t2 0 t2 0 t2 0"/><path transform="translate(87.9 57.4) rotate(146)" d="M-4 0 q1 -2.4 2 0 t2 0 t2 0 t2 0"/><path transform="translate(1.7 66.7) rotate(-15)" d="M-4 0 q1 -2.4 2 0 t2 0 t2 0 t2 0"/><path transform="translate(9.4 67.0) rotate(52)" d="M-4 0 q1 -2.4 2 0 t2 0 t2 0 t2 0"/><path transform="translate(75.8 65.1) rotate(6)" d="M-4 0 q1 -2.4 2 0 t2 0 t2 0 t2 0"/><path transform="translate(82.8 65.8) rotate(122)" d="M-4 0 q1 -2.4 2 0 t2 0 t2 0 t2 0"/><path transform="translate(-4.1 73.9) rotate(124)" d="M-4 0 q1 -2.4 2 0 t2 0 t2 0 t2 0"/><path transform="translate(5.3 73.8) rotate(-13)" d="M-4 0 q1 -2.4 2 0 t2 0 t2 0 t2 0"/><path transform="translate(78.4 75.3) rotate(80)" d="M-4 0 q1 -2.4 2 0 t2 0 t2 0 t2 0"/><path transform="translate(86.3 74.9) rotate(44)" d="M-4 0 q1 -2.4 2 0 t2 0 t2 0 t2 0"/><path transform="translate(-0.4 80.4) rotate(27)" d="M-4 0 q1 -2.4 2 0 t2 0 t2 0 t2 0"/><path transform="translate(8.5 81.8) rotate(47)" d="M-4 0 q1 -2.4 2 0 t2 0 t2 0 t2 0"/><path transform="translate(75.0 82.0) rotate(47)" d="M-4 0 q1 -2.4 2 0 t2 0 t2 0 t2 0"/><path transform="translate(82.2 82.6) rotate(61)" d="M-4 0 q1 -2.4 2 0 t2 0 t2 0 t2 0"/><path transform="translate(-4.1 88.4) rotate(149)" d="M-4 0 q1 -2.4 2 0 t2 0 t2 0 t2 0"/><path transform="translate(4.9 88.1) rotate(5)" d="M-4 0 q1 -2.4 2 0 t2 0 t2 0 t2 0"/><path transform="translate(78.2 88.0) rotate(120)" d="M-4 0 q1 -2.4 2 0 t2 0 t2 0 t2 0"/><path transform="translate(86.1 89.6) rotate(160)" d="M-4 0 q1 -2.4 2 0 t2 0 t2 0 t2 0"/><path transform="translate(0.4 98.1) rotate(159)" d="M-4 0 q1 -2.4 2 0 t2 0 t2 0 t2 0"/><path transform="translate(8.8 97.5) rotate(154)" d="M-4 0 q1 -2.4 2 0 t2 0 t2 0 t2 0"/><path transform="translate(75.6 95.3) rotate(104)" d="M-4 0 q1 -2.4 2 0 t2 0 t2 0 t2 0"/><path transform="translate(84.3 98.1) rotate(149)" d="M-4 0 q1 -2.4 2 0 t2 0 t2 0 t2 0"/><path transform="translate(-4.2 103.4) rotate(77)" d="M-4 0 q1 -2.4 2 0 t2 0 t2 0 t2 0"/><path transform="translate(6.3 105.5) rotate(100)" d="M-4 0 q1 -2.4 2 0 t2 0 t2 0 t2 0"/><path transform="translate(78.4 104.9) rotate(76)" d="M-4 0 q1 -2.4 2 0 t2 0 t2 0 t2 0"/><path transform="translate(87.8 104.6) rotate(44)" d="M-4 0 q1 -2.4 2 0 t2 0 t2 0 t2 0"/></svg><div class="a" style="left:7.6px;top:7.5px;width:69.4px;height:100px;background:#ececec"></div><div class="a" style="left:26.3px;top:48.6px;width:32px;height:32px;border-radius:50%;background:#b9a9a0;border:1px solid #d8d8d8;overflow:hidden"><div class="a" style="left:4px;top:2px;width:21px;height:28px;border-radius:45% 45% 20% 20%;background:#8a4a2c"></div><div class="a" style="left:9px;top:5.5px;width:11px;height:13px;border-radius:50%;background:#e8b9a0"></div><div class="a" style="left:2px;top:21px;width:26px;height:12px;border-radius:40% 40% 0 0;background:#2a2420"></div><div class="a" style="left:11.5px;top:17px;width:6px;height:7px;background:#e8b9a0"></div></div></div><span class="t" style="left:51.50px;top:364.39px;font-size:3.2px;line-height:5px;color:#ea4b2b;font-weight:bold;font-family:'Liberation Sans',sans-serif;letter-spacing:-0.201px;">Room 8</span><span class="t" style="left:28.30px;top:371.42px;font-size:8.6px;line-height:12px;color:#ea4b2b;font-weight:bold;font-family:'Liberation Sans',sans-serif;letter-spacing:-0.180px;">Welcome back</span><span class="t" style="left:33.00px;top:380.42px;font-size:8.6px;line-height:12px;color:#ea4b2b;font-weight:bold;font-family:'Liberation Sans',sans-serif;letter-spacing:-0.098px;">4th graders!</span><span class="t" style="left:44.40px;top:439.78px;font-size:4.4px;line-height:6px;color:#ea4b2b;font-weight:bold;font-family:'Liberation Sans',sans-serif;letter-spacing:0.153px;">Mrs. Jewett</span><div class="a" style="left:110.00px;top:350.70px;width:85.00px;height:104.00px;background:#fff;overflow:hidden;box-shadow:0 0 2px rgba(0,0,0,.2)"><svg style="left:0;top:0" width="85" height="104" viewBox="0 0 85 104"><circle cx="3.0" cy="0.2" r="1.4" fill="#2f6fb8"/><ellipse cx="2.9" cy="6.5" rx="3.1" ry="2.6" fill="#9dd3ea"/><ellipse cx="1.2" cy="14.7" rx="3.6" ry="2.2" fill="#9dd3ea"/><circle cx="1.8" cy="19.6" r="1.4" fill="#2f6fb8"/><ellipse cx="1.6" cy="25.8" rx="3.9" ry="2.4" fill="#2f6fb8"/><rect x="-0.2" y="31.3" width="2.4" height="9.7" rx="1.2" fill="#f26a57" transform="rotate(-6 1.0 36.1)"/><rect x="0.0" y="42.3" width="2.4" height="4.3" rx="1.2" fill="#2f6fb8" transform="rotate(-17 1.2 44.4)"/><rect x="1.0" y="50.0" width="2.4" height="9.3" rx="1.2" fill="#2f6fb8" transform="rotate(-23 2.2 54.6)"/><ellipse cx="0.9" cy="64.8" rx="2.7" ry="3.4" fill="#f5b92f"/><ellipse cx="2.0" cy="73.7" rx="2.6" ry="3.8" fill="#9dd3ea"/><ellipse cx="2.0" cy="85.0" rx="4.0" ry="4.5" fill="#f26a57"/><circle cx="1.5" cy="93.4" r="1.4" fill="#2f6fb8"/><ellipse cx="3.3" cy="98.8" rx="2.7" ry="2.6" fill="#2f6fb8"/><ellipse cx="3.3" cy="106.7" rx="2.3" ry="2.9" fill="#f26a57"/><ellipse cx="84.4" cy="3.0" rx="3.8" ry="4.4" fill="#f26a57"/><ellipse cx="83.0" cy="14.9" rx="3.8" ry="4.1" fill="#2f6fb8"/><rect x="82.7" y="20.6" width="2.4" height="5.1" rx="1.2" fill="#f26a57" transform="rotate(-1 83.9 23.2)"/><ellipse cx="81.6" cy="33.8" rx="3.3" ry="5.0" fill="#f26a57"/><rect x="83.3" y="40.8" width="2.4" height="6.4" rx="1.2" fill="#f5b92f" transform="rotate(-1 84.5 44.0)"/><ellipse cx="81.6" cy="52.6" rx="3.5" ry="3.8" fill="#2f6fb8"/><ellipse cx="83.8" cy="62.1" rx="2.7" ry="2.5" fill="#f5b92f"/><rect x="81.1" y="67.9" width="2.4" height="6.2" rx="1.2" fill="#9dd3ea" transform="rotate(-29 82.3 71.0)"/><circle cx="83.4" cy="78.3" r="1.4" fill="#2f6fb8"/><ellipse cx="83.9" cy="86.6" rx="3.5" ry="4.4" fill="#f26a57"/><ellipse cx="82.8" cy="94.7" rx="2.1" ry="2.3" fill="#9dd3ea"/><ellipse cx="84.3" cy="103.2" rx="2.6" ry="3.0" fill="#2f6fb8"/><ellipse cx="6.6" cy="1.9" rx="2.6" ry="2.4" fill="#9dd3ea"/><rect x="11.8" y="0.5" width="8.2" height="2.2" rx="1.1" fill="#f26a57" transform="rotate(-31 15.9 1.6)"/><rect x="23.8" y="0.5" width="7.2" height="2.2" rx="1.1" fill="#9dd3ea" transform="rotate(-23 27.5 1.6)"/><rect x="34.2" y="0.5" width="10.7" height="2.2" rx="1.1" fill="#f26a57" transform="rotate(-18 39.6 1.6)"/><ellipse cx="51.6" cy="1.6" rx="5.2" ry="2.6" fill="#2f6fb8"/><ellipse cx="64.5" cy="1.1" rx="3.9" ry="2.1" fill="#f26a57"/><ellipse cx="75.4" cy="0.6" rx="4.4" ry="3.1" fill="#f26a57"/></svg><div class="a" style="left:5.3px;top:5.2px;width:73.4px;height:100px;background:#fafafa"></div></div><span class="t" style="left:133.70px;top:358.08px;font-size:6.4px;line-height:9px;color:#ee6a5f;font-weight:bold;font-family:'Liberation Sans',sans-serif;letter-spacing:-0.272px;">my preschool</span><span class="t" style="left:124.50px;top:364.58px;font-size:6.4px;line-height:9px;color:#ee6a5f;font-weight:bold;font-family:'Liberation Sans',sans-serif;letter-spacing:-0.297px;">supply shopping list</span><span class="t" style="left:124.50px;top:378.43px;font-size:2.8px;line-height:4px;color:#2f6fb8;font-weight:bold;font-family:'Liberation Sans',sans-serif;letter-spacing:-0.050px;">name:</span><div class="a" style="left:124.50px;top:382.20px;width:55.50px;height:0.50px;background:#d8dadd"></div><div class="a" style="left:129.60px;top:389.10px;width:3.00px;height:3.00px;border:0.5px solid #c9ccd0;border-radius:0.8px"></div><span class="t" style="left:137.00px;top:388.60px;font-size:2.9px;line-height:4px;color:#a0a4a8;font-weight:normal;font-family:'Liberation Sans',sans-serif;letter-spacing:-0.104px;">2 boxes crayons</span><div class="a" style="left:129.60px;top:395.63px;width:3.00px;height:3.00px;border:0.5px solid #c9ccd0;border-radius:0.8px"></div><span class="t" style="left:137.00px;top:395.13px;font-size:2.9px;line-height:4px;color:#a0a4a8;font-weight:normal;font-family:'Liberation Sans',sans-serif;letter-spacing:-0.113px;">1 backpack</span><div class="a" style="left:129.60px;top:402.16px;width:3.00px;height:3.00px;border:0.5px solid #c9ccd0;border-radius:0.8px"></div><span class="t" style="left:137.00px;top:401.66px;font-size:2.9px;line-height:4px;color:#a0a4a8;font-weight:normal;font-family:'Liberation Sans',sans-serif;letter-spacing:-0.134px;">1 set plastic pocket folder</span><div class="a" style="left:129.60px;top:408.69px;width:3.00px;height:3.00px;border:0.5px solid #c9ccd0;border-radius:0.8px"></div><span class="t" style="left:137.00px;top:408.19px;font-size:2.9px;line-height:4px;color:#a0a4a8;font-weight:normal;font-family:'Liberation Sans',sans-serif;letter-spacing:-0.119px;">2 composition pocket folder</span><div class="a" style="left:129.60px;top:415.22px;width:3.00px;height:3.00px;border:0.5px solid #c9ccd0;border-radius:0.8px"></div><span class="t" style="left:137.00px;top:414.72px;font-size:2.9px;line-height:4px;color:#a0a4a8;font-weight:normal;font-family:'Liberation Sans',sans-serif;letter-spacing:-0.052px;">1 box washable colour markers</span><div class="a" style="left:129.60px;top:421.75px;width:3.00px;height:3.00px;border:0.5px solid #c9ccd0;border-radius:0.8px"></div><span class="t" style="left:137.00px;top:421.25px;font-size:2.9px;line-height:4px;color:#a0a4a8;font-weight:normal;font-family:'Liberation Sans',sans-serif;letter-spacing:0.046px;">2 "T" or regular glue sticks</span><div class="a" style="left:129.60px;top:428.28px;width:3.00px;height:3.00px;border:0.5px solid #c9ccd0;border-radius:0.8px"></div><span class="t" style="left:137.00px;top:427.78px;font-size:2.9px;line-height:4px;color:#a0a4a8;font-weight:normal;font-family:'Liberation Sans',sans-serif;letter-spacing:-0.137px;">1 scissors/lunchbox snack snacks</span><div class="a" style="left:129.60px;top:434.81px;width:3.00px;height:3.00px;border:0.5px solid #c9ccd0;border-radius:0.8px"></div><span class="t" style="left:137.00px;top:434.31px;font-size:2.9px;line-height:4px;color:#a0a4a8;font-weight:normal;font-family:'Liberation Sans',sans-serif;letter-spacing:-0.083px;">1 washable multicolour paint set</span><div class="a" style="left:129.60px;top:441.34px;width:3.00px;height:3.00px;border:0.5px solid #c9ccd0;border-radius:0.8px"></div><span class="t" style="left:137.00px;top:440.84px;font-size:2.9px;line-height:4px;color:#a0a4a8;font-weight:normal;font-family:'Liberation Sans',sans-serif;letter-spacing:0.133px;">2 pks of blunt scissors</span><div class="a" style="left:0.00px;top:414.00px;width:0.00px;height:0.00px;"></div></div>
<div id="side"><svg style="left:0;top:0" width="105" height="455"><defs><pattern id="dp" width="40" height="40" patternUnits="userSpaceOnUse"><g fill="#3a404c"><rect x="15" y="37" width="1" height="1"/><rect x="34" y="8" width="1" height="1"/><rect x="23" y="38" width="1" height="1"/><rect x="30" y="37" width="1" height="1"/><rect x="4" y="38" width="1" height="1"/><rect x="0" y="30" width="1" height="1"/><rect x="16" y="35" width="1" height="1"/><rect x="14" y="12" width="1" height="1"/><rect x="30" y="34" width="1" height="1"/><rect x="35" y="30" width="1" height="1"/><rect x="25" y="9" width="1" height="1"/><rect x="14" y="9" width="1" height="1"/><rect x="33" y="24" width="1" height="1"/><rect x="0" y="4" width="1" height="1"/><rect x="10" y="37" width="1" height="1"/><rect x="2" y="19" width="1" height="1"/><rect x="1" y="17" width="1" height="1"/><rect x="30" y="38" width="1" height="1"/><rect x="24" y="27" width="1" height="1"/><rect x="25" y="36" width="1" height="1"/><rect x="28" y="8" width="1" height="1"/><rect x="23" y="6" width="1" height="1"/><rect x="2" y="8" width="1" height="1"/><rect x="31" y="13" width="1" height="1"/><rect x="16" y="27" width="1" height="1"/><rect x="19" y="26" width="1" height="1"/><rect x="32" y="24" width="1" height="1"/><rect x="36" y="22" width="1" height="1"/><rect x="34" y="37" width="1" height="1"/><rect x="26" y="37" width="1" height="1"/><rect x="14" y="21" width="1" height="1"/><rect x="1" y="17" width="1" height="1"/><rect x="38" y="10" width="1" height="1"/><rect x="20" y="34" width="1" height="1"/><rect x="36" y="36" width="1" height="1"/><rect x="6" y="13" width="1" height="1"/><rect x="36" y="17" width="1" height="1"/><rect x="18" y="7" width="1" height="1"/><rect x="4" y="30" width="1" height="1"/><rect x="30" y="5" width="1" height="1"/><rect x="22" y="4" width="1" height="1"/><rect x="26" y="9" width="1" height="1"/><rect x="1" y="18" width="1" height="1"/><rect x="27" y="26" width="1" height="1"/><rect x="7" y="2" width="1" height="1"/><rect x="38" y="39" width="1" height="1"/><rect x="2" y="24" width="1" height="1"/><rect x="37" y="21" width="1" height="1"/><rect x="35" y="17" width="1" height="1"/><rect x="32" y="15" width="1" height="1"/><rect x="2" y="19" width="1" height="1"/><rect x="0" y="4" width="1" height="1"/><rect x="6" y="38" width="1" height="1"/><rect x="34" y="2" width="1" height="1"/><rect x="12" y="26" width="1" height="1"/><rect x="18" y="39" width="1" height="1"/><rect x="16" y="9" width="1" height="1"/><rect x="2" y="21" width="1" height="1"/><rect x="20" y="23" width="1" height="1"/><rect x="8" y="24" width="1" height="1"/><rect x="24" y="29" width="1" height="1"/><rect x="33" y="24" width="1" height="1"/><rect x="38" y="35" width="1" height="1"/><rect x="6" y="39" width="1" height="1"/><rect x="32" y="17" width="1" height="1"/><rect x="27" y="15" width="1" height="1"/><rect x="19" y="27" width="1" height="1"/><rect x="16" y="33" width="1" height="1"/><rect x="19" y="35" width="1" height="1"/><rect x="21" y="0" width="1" height="1"/><rect x="26" y="37" width="1" height="1"/><rect x="20" y="1" width="1" height="1"/><rect x="24" y="39" width="1" height="1"/><rect x="37" y="8" width="1" height="1"/><rect x="3" y="21" width="1" height="1"/><rect x="29" y="22" width="1" height="1"/><rect x="22" y="38" width="1" height="1"/><rect x="17" y="31" width="1" height="1"/><rect x="1" y="37" width="1" height="1"/><rect x="3" y="1" width="1" height="1"/><rect x="23" y="16" width="1" height="1"/><rect x="29" y="19" width="1" height="1"/><rect x="37" y="38" width="1" height="1"/><rect x="20" y="11" width="1" height="1"/><rect x="23" y="11" width="1" height="1"/><rect x="20" y="23" width="1" height="1"/><rect x="38" y="16" width="1" height="1"/><rect x="19" y="24" width="1" height="1"/><rect x="6" y="1" width="1" height="1"/><rect x="36" y="8" width="1" height="1"/><rect x="19" y="32" width="1" height="1"/><rect x="14" y="17" width="1" height="1"/><rect x="15" y="20" width="1" height="1"/><rect x="11" y="27" width="1" height="1"/><rect x="6" y="6" width="1" height="1"/></g></pattern></defs><rect width="105" height="455" fill="url(#dp)"/></svg><div class="sbtn" style="left:10.7px;top:11.2px"></div><div class="sbtn" style="left:55.7px;top:11.2px"></div><div class="sbtn" style="left:10.7px;top:56.5px"></div><div class="sbtn" style="left:55.7px;top:56.5px"></div><span class="t" style="left:22.40px;top:32.43px;font-size:8px;line-height:11px;color:#fff;font-weight:bold;font-family:'Liberation Sans',sans-serif;letter-spacing:-0.190px;">Text</span><span class="t" style="left:60.75px;top:27.73px;font-size:8px;line-height:11px;color:#fff;font-weight:bold;font-family:'Liberation Sans',sans-serif;letter-spacing:-0.268px;">Photos</span><span class="t" style="left:60.75px;top:37.23px;font-size:8px;line-height:11px;color:#fff;font-weight:bold;font-family:'Liberation Sans',sans-serif;letter-spacing:-0.163px;">&amp; Video</span><span class="t" style="left:13.75px;top:77.73px;font-size:8px;line-height:11px;color:#fff;font-weight:bold;font-family:'Liberation Sans',sans-serif;letter-spacing:-0.273px;">Graphics</span><span class="t" style="left:65.50px;top:77.73px;font-size:8px;line-height:11px;color:#fff;font-weight:bold;font-family:'Liberation Sans',sans-serif;letter-spacing:-0.141px;">Draw</span><span class="t" style="left:28.70px;top:117.35px;font-size:8.8px;line-height:12px;color:#fff;font-weight:normal;font-family:'Liberation Sans',sans-serif;letter-spacing:-0.329px;-webkit-text-stroke:0.35px #fff;">Background color</span><span class="t" style="left:28.70px;top:140.35px;font-size:8.8px;line-height:12px;color:#fff;font-weight:normal;font-family:'Liberation Sans',sans-serif;letter-spacing:-0.406px;-webkit-text-stroke:0.35px #fff;">Textures</span><span class="t" style="left:28.70px;top:163.35px;font-size:8.8px;line-height:12px;color:#fff;font-weight:normal;font-family:'Liberation Sans',sans-serif;letter-spacing:-0.319px;-webkit-text-stroke:0.35px #fff;">Effects</span><span class="t" style="left:28.70px;top:186.35px;font-size:8.8px;line-height:12px;color:#fff;font-weight:normal;font-family:'Liberation Sans',sans-serif;letter-spacing:-0.412px;-webkit-text-stroke:0.35px #fff;">Edits</span><span class="t" style="left:28.70px;top:210.35px;font-size:8.8px;line-height:12px;color:#fff;font-weight:normal;font-family:'Liberation Sans',sans-serif;letter-spacing:-0.396px;-webkit-text-stroke:0.35px #fff;">Touch Up</span><span class="t" style="left:28.70px;top:233.35px;font-size:8.8px;line-height:12px;color:#fff;font-weight:normal;font-family:'Liberation Sans',sans-serif;letter-spacing:-0.555px;-webkit-text-stroke:0.35px #fff;">Frames</span><span class="t" style="left:28.70px;top:261.35px;font-size:8.8px;line-height:12px;color:#fff;font-weight:normal;font-family:'Liberation Sans',sans-serif;letter-spacing:-0.442px;-webkit-text-stroke:0.35px #fff;">Add bg image...</span><span class="t" style="left:28.70px;top:284.35px;font-size:8.8px;line-height:12px;color:#fff;font-weight:normal;font-family:'Liberation Sans',sans-serif;letter-spacing:-0.379px;-webkit-text-stroke:0.35px #fff;">Comments</span><div class="a" style="left:0;top:105.5px;width:105px;height:1px;background:#363c48"></div><div class="a" style="left:0;top:253.5px;width:105px;height:1px;background:#363c48"></div><div class="a" style="left:0;top:304px;width:105px;height:1px;background:#363c48"></div><div class="a" style="left:97.6px;top:23.9px;width:14.4px;height:14.4px;border-radius:50%;background:#2b303b"></div><svg style="left:101.6px;top:27.6px" width="5" height="7" viewBox="0 0 5 7"><path d="M3.9 0.7 L1.2 3.5 L3.9 6.3" fill="none" stroke="#fff" stroke-width="1.1"/></svg><svg style="left:0;top:0" width="105" height="456" viewBox="0 0 105 456"><g transform="translate(0 -37)"><path d="M70.2 55.6 H72.3 L73.2 53.9 H76.9 L77.8 55.6 H79.8 a1.2 1.2 0 0 1 1.2 1.2 V61.8 a1.2 1.2 0 0 1 -1.2 1.2 H70.2 a1.2 1.2 0 0 1 -1.2 -1.2 V56.8 a1.2 1.2 0 0 1 1.2 -1.2 Z" fill="#fff"/><circle cx="75" cy="59.1" r="2.7" fill="#434a58"/><circle cx="75" cy="59.1" r="1.5" fill="#fff"/><path fill-rule="evenodd" fill="#fff" d="M24 102.2 H31.9 V110 H24 Z M36.3 109.3 a4.7 4.7 0 1 1 -9.4 0 a4.7 4.7 0 1 1 9.4 0 Z"/><g transform="translate(69 114) rotate(-44.5)"><path d="M0 0 L2.2 -1.6 H12.6 V1.6 H2.2 Z" fill="#fff"/><path d="M13.4 -1.6 H15 a1.6 1.6 0 0 1 0 3.2 H13.4 Z" fill="#fff"/></g><path d="M73.6 113.9 H79.6 C81 113.9 81.1 112.4 79.8 111.9 L77.8 111.2" fill="none" stroke="#fff" stroke-width="0.8" stroke-linecap="round"/><circle cx="17" cy="160.4" r="7.4" fill="#fff"/><g transform="translate(17 183.6) rotate(45)" fill="none" stroke="#fff" stroke-width="0.8"><path d="M-4.3 -2.9 H4.3 M-4.3 0 H4.3 M-4.3 2.9 H4.3 M-2.9 -4.3 V4.3 M0 -4.3 V4.3 M2.9 -4.3 V4.3"/></g> <g transform="translate(15.6 204) rotate(47.5)"><rect x="0" y="-1.3" width="10.8" height="2.6" rx="0.6" fill="none" stroke="#fff" stroke-width="0.8"/><path d="M2.6 -1.3 V1.3" stroke="#fff" stroke-width="0.8"/></g><path d="M11.299999999999999 201.39999999999998 L13.9 204.0 M13.9 201.39999999999998 L11.299999999999999 204.0" stroke="#fff" stroke-width="0.8"/><path d="M18.3 201.2 L20.900000000000002 203.8 M20.900000000000002 201.2 L18.3 203.8" stroke="#fff" stroke-width="0.8"/><path d="M11.299999999999999 209.1 L13.9 211.70000000000002 M13.9 209.1 L11.299999999999999 211.70000000000002" stroke="#fff" stroke-width="0.8"/><g fill="none" stroke="#fff" stroke-width="0.85"><path d="M13.8 224.8 V230 M13.8 233.6 V235.6 M20.5 224.8 V225.6 M20.5 229.2 V235.6"/><rect x="11.3" y="230.3" width="5" height="3" rx="0.3"/><rect x="18" y="226" width="5" height="3" rx="0.3"/></g><g fill="none" stroke="#fff" stroke-width="0.9" stroke-linecap="round"><path d="M11.4 250.4 V249 a1.4 1.4 0 0 1 1.4 -1.4 H14.4 M20.4 247.6 H22 a1.4 1.4 0 0 1 1.4 1.4 V250.4 M23.4 256.4 V257.8 a1.4 1.4 0 0 1 -1.4 1.4 H20.4 M14.4 259.2 H12.8 a1.4 1.4 0 0 1 -1.4 -1.4 V256.4"/><circle cx="17.4" cy="251.6" r="1.9"/><path d="M13.6 257 C14.6 254.6 20.2 254.6 21.2 257"/></g><rect x="11.9" y="271.4" width="11" height="11" fill="none" stroke="#fff" stroke-width="1.5" stroke-dasharray="1.6 0.9"/><rect x="12.5" y="272" width="9.8" height="9.8" fill="none" stroke="#fff" stroke-width="0.5"/><g fill="none" stroke="#fff" stroke-width="0.85"><rect x="11.4" y="298.6" width="2.8" height="2.8" rx="0.5"/><rect x="20.4" y="307.2" width="2.8" height="2.8" rx="0.5"/><path d="M14.2 300 H20 a1.8 1.8 0 0 1 1.8 1.8 V307.2 M12.8 301.4 V306.8 a1.8 1.8 0 0 0 1.8 1.8 H20.4"/></g><g fill="none" stroke="#fff" stroke-width="0.9" stroke-linejoin="round"><path d="M12.6 322.8 H22.2 a1.2 1.2 0 0 1 1.2 1.2 V329.4 a1.2 1.2 0 0 1 -1.2 1.2 H16.6 L13.6 333.6 V330.6 H12.6 a1.2 1.2 0 0 1 -1.2 -1.2 V324 a1.2 1.2 0 0 1 1.2 -1.2 Z"/><path d="M14 325.6 H20.8 M14 327.8 H20.8" stroke-width="0.8"/></g><g fill="none" stroke="#fff" stroke-width="0.9"><path d="M12.4 354.6 A4.3 4.3 0 1 1 11.5 358.4"/><path d="M34.3 353.1 A4.3 4.3 0 1 0 38.6 357.8"/></g><path d="M11.2 352.8 L11.4 356 L14.5 355.2 Z" fill="#fff"/><path d="M39.6 353.6 L39 357 L36 355.6 Z" fill="#fff"/><path d="M52.3 352.8 L48.3 361.4 H52.3 Z" fill="none" stroke="#fff" stroke-width="0.8" stroke-linejoin="round"/><path d="M52.9 352.4 L57 361.8 H52.9 Z" fill="#fff"/><path d="M66.9 357 L66.9 352.9 L75.8 357 Z" fill="none" stroke="#fff" stroke-width="0.8" stroke-linejoin="round"/><path d="M66.5 357.5 H76.2 L66.5 361.8 Z" fill="#fff"/><g fill="none" stroke="#fff" stroke-width="0.9"><path d="M85 354.2 H94 M87.8 354 V352.6 H91.2 V354"/><path d="M86.4 354.4 V360.4 a1 1 0 0 0 1 1 H91.6 a1 1 0 0 0 1 -1 V354.4"/></g></g></svg><span class="t" style="left:23.60px;top:14.29px;font-size:17.5px;line-height:23px;color:#fff;font-weight:normal;font-family:'Liberation Serif',serif;letter-spacing:0.000px;transform:scaleX(1.2146);transform-origin:0 0;">T</span></div>
<div id="layers"><span class="t" style="left:7.10px;top:8.62px;font-size:8.6px;line-height:12px;color:#5b7f9c;font-weight:normal;font-family:'Liberation Sans',sans-serif;letter-spacing:-0.857px;">PAGES</span><span class="t" style="left:38.60px;top:8.62px;font-size:8.6px;line-height:12px;color:#3f9bd9;font-weight:normal;font-family:'Liberation Sans',sans-serif;letter-spacing:-0.764px;">LAYERS</span><div class="a" style="left:38.60px;top:27.50px;width:28.80px;height:1.80px;background:#3f9bd9"></div><div class="a" style="left:0.00px;top:29.20px;width:93.00px;height:1.00px;background:#e6e8ea"></div><svg style="left:78.20000000000005px;top:10.200000000000003px" width="9" height="9" viewBox="0 0 9 9"><rect x="0.5" y="0.5" width="8" height="8" rx="0.8" fill="none" stroke="#3b4149" stroke-width="0.9"/><path d="M2.6 2.6 L6.4 6.4 M6.4 2.6 L2.6 6.4" stroke="#3b4149" stroke-width="0.9"/></svg><div class="a" style="left:6.80px;top:36.90px;width:74.80px;height:52.20px;border-radius:3px;box-shadow:0 0 0 0.5px #e4e4e4;background:repeating-conic-gradient(#fff 0% 25%,#dadada 0% 50%) 0 0/12.25px 12.25px;"></div><div class="a" style="left:6.80px;top:104.40px;width:74.80px;height:52.20px;border-radius:3px;box-shadow:0 0 0 0.5px #e4e4e4;background:repeating-conic-gradient(#fff 0% 25%,#dadada 0% 50%) 0 0/12.25px 12.25px;"></div><div class="a" style="left:6.80px;top:172.10px;width:74.80px;height:52.20px;border-radius:3px;box-shadow:0 0 0 0.5px #e4e4e4;background:repeating-conic-gradient(#fff 0% 25%,#dadada 0% 50%) 0 0/12.25px 12.25px;"></div><div class="a" style="left:6.80px;top:239.60px;width:74.80px;height:52.20px;border-radius:3px;box-shadow:0 0 0 0.5px #e4e4e4;background:repeating-conic-gradient(#fff 0% 25%,#dadada 0% 50%) 0 0/12.25px 12.25px;"></div><div class="a" style="left:6.80px;top:307.50px;width:74.80px;height:52.20px;border-radius:3px;box-shadow:0 0 0 0.5px #e4e4e4;background:repeating-conic-gradient(#fff 0% 25%,#dadada 0% 50%) 0 0/12.25px 12.25px;"></div><div class="a" style="left:6.80px;top:375.20px;width:74.80px;height:52.20px;border-radius:3px;box-shadow:0 0 0 0.5px #e4e4e4;background:repeating-conic-gradient(#fff 0% 25%,#dadada 0% 50%) 0 0/12.25px 12.25px;"></div><div class="a" style="left:0.00px;top:96.30px;width:90.00px;height:1.00px;background:#e6e8ea"></div><div class="a" style="left:0.00px;top:163.90px;width:90.00px;height:1.00px;background:#e6e8ea"></div><div class="a" style="left:0.00px;top:231.40px;width:90.00px;height:1.00px;background:#e6e8ea"></div><div class="a" style="left:0.00px;top:299.20px;width:90.00px;height:1.00px;background:#e6e8ea"></div><div class="a" style="left:0.00px;top:366.70px;width:90.00px;height:1.00px;background:#e6e8ea"></div><span class="t" style="left:8.00px;top:58.23px;font-size:8px;line-height:11px;color:#111;font-weight:normal;font-family:'Liberation Sans',sans-serif;letter-spacing:0.000px;-webkit-text-stroke:0.3px #111;transform:scaleX(0.9832);transform-origin:0 0;">5TH ANNUAL PAINT</span><span class="t" style="left:8.00px;top:114.41px;font-size:24.2px;line-height:32px;color:#111;font-weight:normal;font-family:'Liberation Sans',sans-serif;letter-spacing:0.000px;-webkit-text-stroke:0.8px #111;transform:scaleX(0.8989);transform-origin:0 0;">EVENT</span><span class="t" style="left:17.40px;top:172.24px;font-size:39.7px;line-height:52px;color:#111;font-weight:normal;font-family:'Liberation Sans',sans-serif;letter-spacing:0.000px;-webkit-text-stroke:1.1px #111;transform:scaleX(0.8596);transform-origin:0 0;">SIP</span><span class="t" style="left:8.00px;top:246.32px;font-size:31.4px;line-height:41px;color:#111;font-weight:normal;font-family:'Liberation Sans',sans-serif;letter-spacing:0.000px;-webkit-text-stroke:0.9px #111;transform:scaleX(1.1059);transform-origin:0 0;">AND</span><span class="t" style="left:7.40px;top:316.43px;font-size:25.9px;line-height:34px;color:#111;font-weight:normal;font-family:'Liberation Sans',sans-serif;letter-spacing:0.000px;-webkit-text-stroke:0.8px #111;transform:scaleX(0.9875);transform-origin:0 0;">PAINT</span><svg style="left:7px;top:375.2px" width="75" height="52" viewBox="0 0 75 52"><path d="M4.5 17.8 L8 16.6 L16 16.2 L30 16 L50 15.6 L64 15.8 L69.5 16.8 L70.6 18 L71.4 21 L72 24 L72.4 28 L72.2 31 L71 31.6 L72 32.4 L69 33.4 L64 34.6 L40 35 L20 35.2 L8 35.6 L5 35 L3.4 33 L2 31 L2.6 29.4 L1 27.6 L1.6 25 L0.8 23 L2.4 21.4 L1.8 20 Z" fill="#e98b8b"/></svg><div class="a" style="left:89.80px;top:30.00px;width:3.20px;height:387.00px;background:#eceeef"></div><div class="a" style="left:89.80px;top:30.00px;width:3.20px;height:195.50px;background:#d6d9dc"></div></div>
<div id="bot"><div class="a" style="left:79.30px;top:7.00px;width:1.00px;height:21.00px;background:#e3e5e7"></div><div class="a" style="left:664.60px;top:7.00px;width:1.00px;height:22.00px;background:#e3e5e7"></div><span class="t" style="left:141.00px;top:11.60px;font-size:9.8px;line-height:13px;color:#7b8087;font-weight:bold;font-family:'Liberation Sans',sans-serif;letter-spacing:0.030px;">15%</span><span class="t" style="left:337.20px;top:11.64px;font-size:10px;line-height:13px;color:#5f656c;font-weight:normal;font-family:'Liberation Sans',sans-serif;letter-spacing:0.273px;">Undo</span><span class="t" style="left:423.00px;top:11.64px;font-size:10px;line-height:13px;color:#c6cacd;font-weight:normal;font-family:'Liberation Sans',sans-serif;letter-spacing:-0.227px;">Redo</span><span class="t" style="left:626.90px;top:11.54px;font-size:10px;line-height:13px;color:#8a8f96;font-weight:normal;font-family:'Liberation Sans',sans-serif;letter-spacing:-0.492px;">Pages</span><svg style="left:0;top:0" width="710" height="37" viewBox="0 0 710 37"><g transform="translate(-314 -456)"><path fill-rule="evenodd" fill="#7b8087" stroke="#7b8087" stroke-width="0.8" stroke-linejoin="round" d="M339.44 479.27 L338.87 481.23 L335.73 481.23 L335.16 479.27 L333.98 478.59 L332.00 479.07 L330.43 476.35 L331.84 474.88 L331.84 473.52 L330.43 472.05 L332.00 469.33 L333.98 469.81 L335.16 469.13 L335.73 467.17 L338.87 467.17 L339.44 469.13 L340.62 469.81 L342.60 469.33 L344.17 472.05 L342.76 473.52 L342.76 474.88 L344.17 476.35 L342.60 479.07 L340.62 478.59 Z M341.60 474.2 a4.3 4.3 0 1 0 -8.6 0 a4.3 4.3 0 1 0 8.6 0 Z"/><path d="M370.9 465.4 V482.7" stroke="#7b8087" stroke-width="1.2"/><rect x="365.6" y="468.6" width="5.4" height="10.8" rx="0.6" fill="#fff" stroke="#7b8087" stroke-width="1.2"/><path d="M370.9 468 H376 a1 1 0 0 1 1 1 V479 a1 1 0 0 1 -1 1 H370.9 Z" fill="#7b8087"/><path d="M374.6 471 V478.4" stroke="#6fb3e6" stroke-width="0.8" stroke-dasharray="1 1.9"/><g fill="none" stroke="#7b8087" stroke-width="1.1"><circle cx="416.7" cy="474" r="5.5"/><path d="M413.8 474 H419.6"/><circle cx="439.2" cy="474" r="5.5"/><path d="M436.3 474 H442.1 M439.2 471.1 V476.9"/></g><path d="M482.2 472.4 L485.5 475.8 L488.8 472.4" fill="none" stroke="#7b8087" stroke-width="1.2"/><g fill="none" stroke-width="1.1" stroke-linecap="round" stroke-linejoin="round"><path d="M688.2 468.8 L684.4 472.6 L688.2 476.4 M684.6 472.6 H694.6 a3.6 3.6 0 0 1 0 7.2 H693.6" stroke="#5f656c"/><path d="M724.4 468.8 L728.2 472.6 L724.4 476.4 M728 472.6 H718 a3.6 3.6 0 0 0 0 7.2 H719" stroke="#c6cacd"/></g><g fill="none" stroke="#7b8087" stroke-width="1.1" stroke-linejoin="round"><path d="M923.9 466.6 H931 L934.8 470.4 V480.4 a1.2 1.2 0 0 1 -1.2 1.2 H923.9 a1.2 1.2 0 0 1 -1.2 -1.2 V467.8 a1.2 1.2 0 0 1 1.2 -1.2 Z"/><path d="M926.4 474.8 H931 M928.7 472.5 V477.1"/></g><path d="M1001.5 466.8 L1009.2 470.3 L1001.5 473.8 L993.8 470.3 Z" fill="#3f9fe0"/><path d="M993.8 473 L1001.5 476.5 L1009.2 473 L1009.2 474.8 L1001.5 478.3 L993.8 474.8 Z" fill="#3f9fe0"/><path d="M993.8 476.6 L1001.5 480.1 L1009.2 476.6 L1009.2 478.4 L1001.5 481.9 L993.8 478.4 Z" fill="#3f9fe0"/></g></svg></div>
<div id="edge"><i></i></div>
</body></html>
